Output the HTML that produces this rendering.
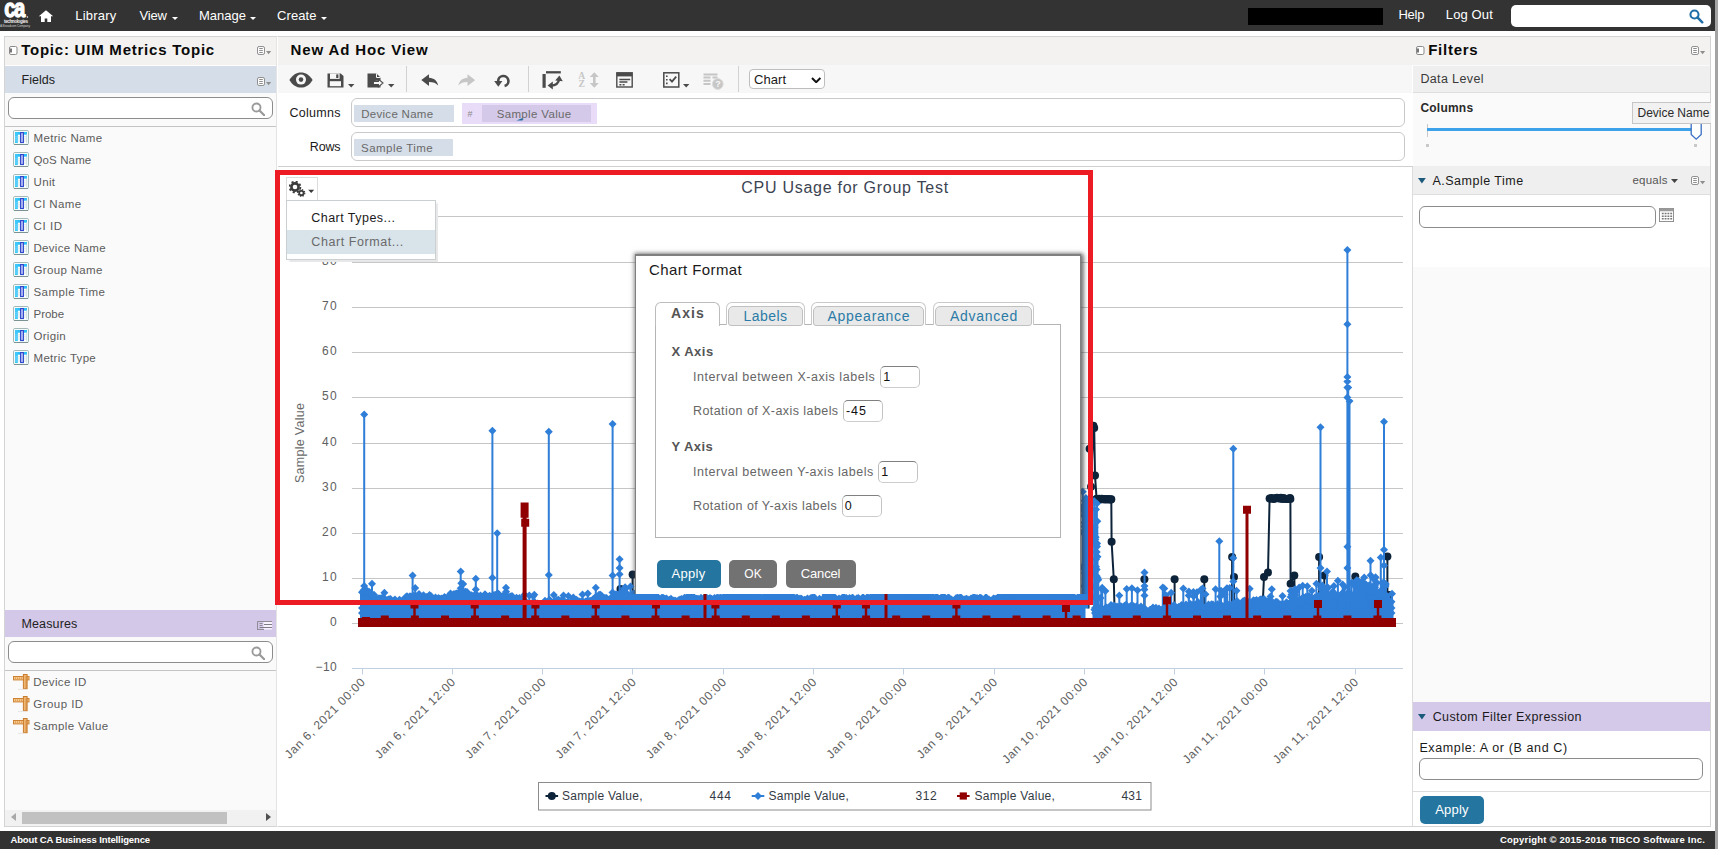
<!DOCTYPE html>
<html><head><meta charset="utf-8"><title>New Ad Hoc View</title>
<style>
*{box-sizing:border-box;margin:0;padding:0}
html,body{width:1725px;height:855px;overflow:hidden;background:#fff}
body{font-family:"Liberation Sans",sans-serif;font-size:12px;color:#222;position:relative}
.a{position:absolute}
.t{position:absolute;white-space:nowrap;line-height:1}
#nav{left:0;top:0;width:1715px;height:31px;background:#333}
#nav .t{color:#fff;font-size:13px;top:9px;letter-spacing:.35px}
.caret{position:absolute;width:0;height:0;border-left:4px solid transparent;border-right:4px solid transparent;border-top:4px solid #fff}
.panel{border:1px solid #d9d9d9;background:#fafafa}
.ptitle{background:#f3f2f1}
.h1{font-weight:bold;font-size:15px;color:#111;letter-spacing:.55px}
.inp{position:absolute;background:#fff;border:1px solid #9a9a9a;border-radius:5px}
.li{font-size:11.5px;color:#555;letter-spacing:.45px}
.btn{position:absolute;border-radius:4px;color:#fff;font-size:12.5px;text-align:center;letter-spacing:.3px}
.pill{position:absolute;background:#d4dce8}
.pill span,.pilltxt{position:absolute;white-space:nowrap;font-size:11.5px;color:#666;letter-spacing:.45px;line-height:1}
.lbl{font-size:12.5px;color:#222;letter-spacing:.35px}
.dlg .t{font-size:12.5px;color:#555;letter-spacing:.3px}
.tab{position:absolute;border:1px solid #b9b9b9;border-bottom:none;border-radius:5px 5px 0 0;background:#fff}
.tabi{position:absolute;background:#e9e9e9;border:1px solid #c4c4c4;border-bottom:none;border-radius:4px 4px 0 0}
.dinp{position:absolute;background:#fff;border:1px solid #a8a8a8;border-radius:4px;font-size:12.5px;color:#111;line-height:1}
</style></head><body>

<div class="a " style="left:277px;top:36px;width:1434px;height:791px;background:#fff;border:1px solid #d4d4d4;border-left-color:#fff"></div><div class="a " style="left:278px;top:37px;width:1432px;height:28px;background:#f3f2f0"></div><div class="t " style="left:290.5px;top:42.0px;font-size:15px;letter-spacing:0.87px;font-weight:bold;color:#0a0a0a;">New Ad Hoc View</div><div class="a " style="left:278px;top:65px;width:1134px;height:27.5px;background:#f7f7f7"></div><svg class="a" style="left:288.5px;top:72px" width="24" height="16" viewBox="0 0 24 16"><path d="M0.4 8C3.5 2.8 7.5 0.4 12 0.4S20.5 2.8 23.6 8C20.5 13.2 16.5 15.6 12 15.6S3.5 13.2 0.4 8z" fill="#4a4a4a"/><circle cx="12" cy="7.6" r="5" fill="#f7f7f7"/><circle cx="12" cy="7.6" r="2.3" fill="#4a4a4a"/></svg><svg class="a" style="left:326.5px;top:73px" width="17" height="15" viewBox="0 0 17 15"><path d="M0.5 0.5h13.2l2.8 2.4v11.6h-16z" fill="#4a4a4a"/><rect x="3" y="0.5" width="9.6" height="5.4" fill="#f7f7f7"/><rect x="9.2" y="1.4" width="2.2" height="3.6" fill="#4a4a4a"/><rect x="2.8" y="8.2" width="11.2" height="5" fill="#f7f7f7"/></svg><svg class="a" style="left:347.5px;top:84.3px" width="7" height="4" viewBox="0 0 7 4"><path d="M0 0h6.4L3.2 3.4z" fill="#4a4a4a"/></svg><svg class="a" style="left:367px;top:73px" width="17" height="15" viewBox="0 0 17 15"><path d="M0.5 0.5h9l4 4v3.2h-5v4h5v2.8h-13z" fill="#4a4a4a"/><path d="M9.5 0.5v4h4" fill="none" stroke="#f7f7f7" stroke-width="1"/><path d="M6.4 8.4h5v-2.2l4.6 3.8-4.6 3.8v-2.2h-5z" fill="#f7f7f7" stroke="#4a4a4a" stroke-width="1.1"/></svg><svg class="a" style="left:387.5px;top:84.3px" width="7" height="4" viewBox="0 0 7 4"><path d="M0 0h6.4L3.2 3.4z" fill="#4a4a4a"/></svg><div class="a " style="left:406px;top:66px;width:1px;height:26px;background:#d2d2d2"></div><svg class="a" style="left:421.3px;top:74px" width="17.5" height="12.5" viewBox="0 0 17.5 12.5"><path d="M0.3 6.1L8 0.2v3.5c4.9 0.3 8.2 2.7 9.2 7.9-2.2-2.7-4.9-3.6-9.2-3.6v4.1z" fill="#4a4a4a"/></svg><svg class="a" style="left:457.8px;top:74px" width="17.5" height="12.5" viewBox="0 0 17.5 12.5"><g transform="translate(17.5 0) scale(-1 1)"><path d="M0.3 6.1L8 0.2v3.5c4.9 0.3 8.2 2.7 9.2 7.9-2.2-2.7-4.9-3.6-9.2-3.6v4.1z" fill="#c6c6c6"/></g></svg><svg class="a" style="left:494px;top:73.5px" width="16" height="14" viewBox="0 0 16 14"><path d="M4.2 7.2A5.1 5.1 0 1 1 10.6 12" fill="none" stroke="#4a4a4a" stroke-width="2.6"/><path d="M0.2 7h8.2l-4.1 5.8z" fill="#4a4a4a"/></svg><div class="a " style="left:528px;top:66px;width:1px;height:26px;background:#d2d2d2"></div><svg class="a" style="left:542px;top:71px" width="21" height="19" viewBox="0 0 21 19"><path d="M4 1.3h14.8" stroke="#4a4a4a" stroke-width="2.3"/><path d="M2.1 3v13.8" stroke="#4a4a4a" stroke-width="3.2"/><path d="M9 14.6c5 0 7.6-2.2 8.2-6.4" fill="none" stroke="#4a4a4a" stroke-width="2.3"/><path d="M13.2 9.6l4.2-5 3.4 5.6z" fill="#4a4a4a"/><path d="M10.8 10.6v8L5.6 14.6z" fill="#4a4a4a"/></svg><svg class="a" style="left:577.5px;top:72px" width="21" height="16" viewBox="0 0 21 16"><text x="0.2" y="6.8" font-family="Liberation Serif" font-weight="bold" font-size="9.6" fill="#c6c6c6">A</text><text x="0.6" y="15.4" font-family="Liberation Serif" font-weight="bold" font-size="9.6" fill="#c6c6c6">Z</text><path d="M16.3 3.5v9" stroke="#c6c6c6" stroke-width="2.6"/><path d="M11.8 5l4.5-4.8L20.8 5zM11.8 11l4.5 4.8L20.8 11z" fill="#c6c6c6"/></svg><svg class="a" style="left:615.5px;top:72px" width="18" height="16" viewBox="0 0 18 16"><rect x="0.8" y="0.8" width="15.4" height="14.2" fill="#f7f7f7" stroke="#4a4a4a" stroke-width="1.4"/><rect x="0.8" y="0.8" width="15.4" height="3.6" fill="#4a4a4a"/><path d="M3.4 7.4h10.8M3.4 10h8" stroke="#4a4a4a" stroke-width="1.5"/><path d="M3.4 12.8h2M6.6 12.8h2" stroke="#4a4a4a" stroke-width="1.4"/></svg><svg class="a" style="left:662.5px;top:72px" width="17" height="16" viewBox="0 0 17 16"><rect x="0.8" y="0.8" width="15" height="14.2" fill="#f7f7f7" stroke="#4a4a4a" stroke-width="1.5"/><path d="M3 4.2h1.6M3 7.8h1.6M3 11.4h1.6" stroke="#4a4a4a" stroke-width="1.6"/><path d="M6.6 7.2l2.4 2.4 4.2-5" fill="none" stroke="#4a4a4a" stroke-width="1.8"/></svg><svg class="a" style="left:683.2px;top:84.3px" width="7" height="4" viewBox="0 0 7 4"><path d="M0 0h6.4L3.2 3.4z" fill="#4a4a4a"/></svg><svg class="a" style="left:703px;top:72.5px" width="21" height="17" viewBox="0 0 21 17"><path d="M0.5 1.4h14M0.5 4.6h7M0.5 7.8h7M0.5 11h7M9.5 4.6h5" stroke="#c6c6c6" stroke-width="2"/><circle cx="14.8" cy="11" r="5.4" fill="#c6c6c6" stroke="#dcdcdc"/><text x="12.3" y="14.2" font-family="Liberation Sans" font-weight="bold" font-size="9" fill="#f7f7f7">?</text></svg><div class="a " style="left:737.5px;top:66px;width:1px;height:26px;background:#d2d2d2"></div><div class="a " style="left:748.5px;top:69px;width:76.5px;height:20.3px;background:#fff;border:1px solid #bebebe;border-radius:4px"></div><div class="t " style="left:754.0px;top:73.0px;font-size:13px;letter-spacing:0.05px;color:#1a1a1a;">Chart</div><svg class="a" style="left:810.5px;top:76.5px" width="10.5" height="6.5" viewBox="0 0 10.5 6.5"><path d="M1 1l4.2 4.2L9.4 1" fill="none" stroke="#111" stroke-width="2"/></svg><div class="t " style="left:289.4px;top:107.0px;font-size:12.5px;letter-spacing:0.31px;color:#1a1a1a;">Columns</div><div class="a " style="left:351px;top:98px;width:1054px;height:29px;background:#fff;border:1px solid #c9c9c9;border-radius:6px"></div><div class="a " style="left:354px;top:105px;width:99.5px;height:17px;background:#d5dde8"></div><div class="t " style="left:361.2px;top:109.0px;font-size:11.5px;letter-spacing:0.29px;color:#6a6a6a;">Device Name</div><div class="a " style="left:461.5px;top:103px;width:135.5px;height:20.5px;background:#e8dcf8"></div><div class="a " style="left:481.8px;top:105px;width:109.7px;height:16.7px;background:#d4c9e8"></div><div class="t " style="left:467.5px;top:110.0px;font-size:10px;color:#8a8a8a;font-size:9px;">#</div><div class="t " style="left:496.7px;top:109.0px;font-size:11.5px;letter-spacing:0.34px;color:#6a6a6a;">Sample Value</div><svg class="a" style="left:516px;top:116.5px" width="7" height="4" viewBox="0 0 7 4"><path d="M0.5 3.5L6.5 1v2.5z" fill="#1f6ea6"/></svg><div class="t " style="left:309.8px;top:141.0px;font-size:12.5px;letter-spacing:-0.15px;color:#1a1a1a;">Rows</div><div class="a " style="left:351px;top:132px;width:1054px;height:29px;background:#fff;border:1px solid #c9c9c9;border-radius:6px"></div><div class="a " style="left:354px;top:139px;width:99px;height:17px;background:#d5dde8"></div><div class="t " style="left:361.1px;top:143.0px;font-size:11.5px;letter-spacing:0.45px;color:#6a6a6a;">Sample Time</div><div class="a " style="left:278px;top:166px;width:1135px;height:1px;background:#cfcfcf"></div>
<div class="a " style="left:1413px;top:65px;width:297px;height:761px;background:#fafafa"></div><div class="a " style="left:1412px;top:167px;width:1px;height:659px;background:#dcdcdc"></div><svg class="a" style="left:1415.8px;top:45.5px" width="9" height="10" viewBox="0 0 9 10"><rect x="0.5" y="0.5" width="7.5" height="8" rx="1.5" fill="#fff" stroke="#8a8a8a"/><rect x="1" y="2.5" width="2" height="4" fill="#777"/></svg><div class="t " style="left:1428.2px;top:42.0px;font-size:15px;letter-spacing:0.75px;font-weight:bold;color:#0a0a0a;">Filters</div><svg class="a" style="left:1691px;top:46px" width="15" height="10" viewBox="0 0 15 10"><rect x="0.5" y="0.5" width="7" height="8" rx="1.6" fill="#fdfdfd" stroke="#8e8e8e"/><path d="M2.2 2.5h3.6M2.2 4.5h3.6M2.2 6.5h3.6" stroke="#8e8e8e" stroke-width="1"/><path d="M9 5h5.2l-2.6 3.2z" fill="#8e8e8e"/></svg><div class="a " style="left:1413px;top:65.5px;width:297px;height:27px;background:#efefef;border-bottom:1px solid #dedede"></div><div class="t " style="left:1420.4px;top:73.0px;font-size:12.5px;letter-spacing:0.37px;color:#3a3a3a;">Data Level</div><div class="t " style="left:1420.4px;top:102.0px;font-size:12px;letter-spacing:0.23px;font-weight:bold;color:#2a2a2a;">Columns</div><div class="a " style="left:1632px;top:101.5px;width:79px;height:22.5px;background:#f1f1f1;border:1px solid #c6c6c6;border-right:none"></div><div class="t " style="left:1637.5px;top:107.0px;font-size:12px;letter-spacing:-0.02px;color:#2a2a2a;">Device Name</div><div class="a " style="left:1426.5px;top:124px;width:1px;height:13px;background:#c8c8c8"></div><div class="a " style="left:1427px;top:127.5px;width:265px;height:3.8px;background:#3ea2ea"></div><svg class="a" style="left:1689.5px;top:123.5px" width="13" height="17" viewBox="0 0 13 17"><path d="M1.2 0v10.5L6.2 15.2 11.2 10.5V0" fill="#fff" stroke="#3b6fc4" stroke-width="1.3"/></svg><div class="a " style="left:1426px;top:144px;width:3px;height:3px;background:#c9c9c9"></div><div class="a " style="left:1694px;top:144px;width:3px;height:3px;background:#c9c9c9"></div><div class="a " style="left:1413px;top:166px;width:297px;height:28.5px;background:#efefef;border-bottom:1px solid #dedede"></div><svg class="a" style="left:1418px;top:178px" width="8" height="6"><path d="M0 0h7.8L3.9 5.4z" fill="#1c5a7c"/></svg><div class="t " style="left:1432.5px;top:175.0px;font-size:12.5px;letter-spacing:0.49px;color:#1a1a1a;">A.Sample Time</div><div class="t " style="left:1632.5px;top:175.0px;font-size:11.5px;letter-spacing:0.22px;color:#555;">equals</div><svg class="a" style="left:1671.3px;top:179.2px" width="8" height="5"><path d="M0 0h7L3.5 4z" fill="#444"/></svg><svg class="a" style="left:1691px;top:176px" width="15" height="10" viewBox="0 0 15 10"><rect x="0.5" y="0.5" width="7" height="8" rx="1.6" fill="#fdfdfd" stroke="#8e8e8e"/><path d="M2.2 2.5h3.6M2.2 4.5h3.6M2.2 6.5h3.6" stroke="#8e8e8e" stroke-width="1"/><path d="M9 5h5.2l-2.6 3.2z" fill="#8e8e8e"/></svg><div class="a " style="left:1413px;top:194.5px;width:297px;height:72px;background:#fff"></div><div class="a " style="left:1419px;top:206px;width:237px;height:22px;background:#fff;border:1px solid #8c8c8c;border-radius:6px"></div><svg class="a" style="left:1659px;top:208px" width="15" height="14" viewBox="0 0 16 15" preserveAspectRatio="none"><rect x="0.5" y="0.5" width="15" height="14" fill="#fff" stroke="#8a8a8a"/><rect x="0.5" y="0.5" width="15" height="3" fill="#9a9a9a"/><path d="M3 6h2M6 6h2M9 6h2M12 6h2M3 8.8h2M6 8.8h2M9 8.8h2M12 8.8h2M3 11.6h2M6 11.6h2M9 11.6h2M12 11.6h2" stroke="#777" stroke-width="1.6"/></svg><div class="a " style="left:1413px;top:701.5px;width:297px;height:29px;background:#d5c9ea"></div><svg class="a" style="left:1418px;top:713.5px" width="8" height="6"><path d="M0 0h7.8L3.9 5.4z" fill="#1c5a7c"/></svg><div class="t " style="left:1432.7px;top:711.0px;font-size:12.5px;letter-spacing:0.40px;color:#1a1a1a;">Custom Filter Expression</div><div class="a " style="left:1413px;top:730.5px;width:297px;height:95.5px;background:#fff"></div><div class="t " style="left:1419.4px;top:742.0px;font-size:12.5px;letter-spacing:0.62px;color:#1a1a1a;">Example: A or (B and C)</div><div class="a " style="left:1419px;top:758px;width:284px;height:22px;background:#fff;border:1px solid #8c8c8c;border-radius:6px"></div><div class="a " style="left:1413px;top:791px;width:297px;height:1px;background:#dcdcdc"></div><div class="a " style="left:1420px;top:796px;width:64px;height:27.7px;background:#24759f;border-radius:5px"></div><div class="t " style="left:1435.2px;top:803.0px;font-size:13px;letter-spacing:0.22px;color:#fff;">Apply</div>
<div class="a " style="left:0px;top:0px;width:1715px;height:30.5px;background:#333"><svg class="a" style="left:0;top:0" width="34" height="31" viewBox="0 0 34 31"><text transform="translate(4.2 17.2) scale(.78 1)" font-family="Liberation Sans" font-weight="bold" font-size="26" letter-spacing="-2" fill="#fff" stroke="#fff" stroke-width="1.3" stroke-linejoin="round">ca</text><text x="4" y="22.6" font-family="Liberation Sans" font-weight="bold" font-size="4.6" fill="#eee" textLength="24">technologies</text><text x="0" y="27.2" font-family="Liberation Sans" font-size="3.2" fill="#ccc" textLength="30">A Broadcom Company</text><circle cx="27.4" cy="17" r=".7" fill="#fff"/></svg><svg class="a" style="left:38px;top:9.5px" width="16" height="13" viewBox="0 0 16 13"><path d="M8 0.3L0.8 6.2h2.2v5.9h3.7V8.6h2.6v3.5h3.7V6.2h2.2z" fill="#fff"/></svg><div class="t " style="left:75.2px;top:9.0px;font-size:13px;letter-spacing:0.21px;color:#fff;">Library</div><div class="t " style="left:139.6px;top:9.0px;font-size:13px;letter-spacing:-0.18px;color:#fff;">View</div><div class="caret" style="left:172px;top:16.5px;border-width:3.5px 3px 0 3px"></div><div class="t " style="left:199.0px;top:9.0px;font-size:13px;letter-spacing:0.00px;color:#fff;">Manage</div><div class="caret" style="left:250px;top:16.5px;border-width:3.5px 3px 0 3px"></div><div class="t " style="left:277.0px;top:9.0px;font-size:13px;letter-spacing:0.08px;color:#fff;">Create</div><div class="caret" style="left:320.5px;top:16.5px;border-width:3.5px 3px 0 3px"></div><div class="a " style="left:1248px;top:8px;width:135px;height:17px;background:#000"></div><div class="t " style="left:1398.4px;top:8.0px;font-size:13px;letter-spacing:-0.21px;color:#fff;">Help</div><div class="t " style="left:1445.8px;top:8.0px;font-size:13px;letter-spacing:0.12px;color:#fff;">Log Out</div><div class="a " style="left:1511px;top:5px;width:200px;height:22px;background:#fff;border-radius:5px"></div><svg class="a" style="left:1689px;top:9px" width="14.5" height="14.5" viewBox="0 0 14 14"><circle cx="5.3" cy="5.3" r="3.9" fill="none" stroke="#1f6ea6" stroke-width="2"/><path d="M8.2 8.2L12.8 12.8" stroke="#1f6ea6" stroke-width="2.4" stroke-linecap="round"/></svg></div><div class="a " style="left:1715px;top:0px;width:3px;height:849px;background:#a4a4a4"></div><div class="a " style="left:0px;top:831px;width:1715px;height:18px;background:#323232"></div><div class="t " style="left:10.4px;top:835.0px;font-size:9.5px;letter-spacing:-0.12px;font-weight:bold;color:#fff;">About CA Business Intelligence</div><div class="t " style="left:1499.9px;top:835.0px;font-size:9.5px;letter-spacing:0.21px;font-weight:bold;color:#fff;">Copyright © 2015-2016 TIBCO Software Inc.</div><div class="a " style="left:4px;top:36px;width:273px;height:791px;background:#fafafa;border:1px solid #d4d4d4;border-right-color:#e4e4e4"></div><div class="a " style="left:5px;top:37px;width:271px;height:27.5px;background:#f3f2f0"></div><svg class="a" style="left:8.7px;top:45.5px" width="9" height="10" viewBox="0 0 9 10"><rect x="0.5" y="0.5" width="7.5" height="8" rx="1.5" fill="#fff" stroke="#8a8a8a"/><rect x="1" y="2.5" width="2" height="4" fill="#777"/></svg><div class="t " style="left:21.2px;top:42.0px;font-size:15px;letter-spacing:0.77px;font-weight:bold;color:#0a0a0a;">Topic: UIM Metrics Topic</div><svg class="a" style="left:257px;top:46px" width="15" height="10" viewBox="0 0 15 10"><rect x="0.5" y="0.5" width="7" height="8" rx="1.6" fill="#fdfdfd" stroke="#8e8e8e"/><path d="M2.2 2.5h3.6M2.2 4.5h3.6M2.2 6.5h3.6" stroke="#8e8e8e" stroke-width="1"/><path d="M9 5h5.2l-2.6 3.2z" fill="#8e8e8e"/></svg><div class="a " style="left:5px;top:64.5px;width:271px;height:1.5px;background:#fdfdfd"></div><div class="a " style="left:5px;top:66px;width:271px;height:27px;background:#d5dde8"></div><div class="t " style="left:21.5px;top:74.0px;font-size:12.5px;letter-spacing:0.03px;color:#222;">Fields</div><svg class="a" style="left:257px;top:77px" width="15" height="10" viewBox="0 0 15 10"><rect x="0.5" y="0.5" width="7" height="8" rx="1.6" fill="#fdfdfd" stroke="#8e8e8e"/><path d="M2.2 2.5h3.6M2.2 4.5h3.6M2.2 6.5h3.6" stroke="#8e8e8e" stroke-width="1"/><path d="M9 5h5.2l-2.6 3.2z" fill="#8e8e8e"/></svg><div class="a " style="left:8px;top:97px;width:265px;height:22px;background:#fff;border:1px solid #8c8c8c;border-radius:6px"></div><svg class="a" style="left:250.5px;top:101.5px" width="14.5" height="14.5" viewBox="0 0 14 14"><circle cx="5.3" cy="5.3" r="3.9" fill="none" stroke="#9a9a9a" stroke-width="1.8"/><path d="M8.2 8.2L12.8 12.8" stroke="#9a9a9a" stroke-width="2.2" stroke-linecap="round"/></svg><div class="a " style="left:5px;top:126px;width:271px;height:1px;background:#c4c4c4"></div><svg class="a" style="left:13px;top:130px" width="16" height="16" viewBox="0 0 16 16"><rect x="0.5" y="0.5" width="15" height="14" rx="1.2" fill="#f3fbfb" stroke="#a3b8b8"/><path d="M1 14.5h14" stroke="#7d9292"/><rect x="2" y="2" width="12" height="11" fill="#fff"/><rect x="2" y="2" width="12" height="2.7" fill="#2cc0f8"/><rect x="2" y="2" width="2.9" height="11" fill="#3dc7fb"/><path d="M4.9 6.8H14M4.9 8.9H14M4.9 11H14M13.6 4.7V13" stroke="#c9dcdc" stroke-width=".8"/><path d="M2 6.8h2.9M2 8.9h2.9M2 11h2.9" stroke="#86dcfc" stroke-width=".7"/><rect x="7.05" y="2" width="3.9" height="2.6" fill="#6a80e8"/><rect x="7.6" y="2.6" width="2.8" height="9.9" fill="#bcc6f6" stroke="#3148cd" stroke-width="1.15"/><path d="M8.2 4.8h1.6M8.2 6.9h1.6M8.2 9h1.6M8.2 11h1.6" stroke="#a9b4f0" stroke-width=".6"/></svg><div class="t " style="left:33.5px;top:133.0px;font-size:11.5px;letter-spacing:0.34px;color:#5c5c5c;">Metric Name</div><svg class="a" style="left:13px;top:152px" width="16" height="16" viewBox="0 0 16 16"><rect x="0.5" y="0.5" width="15" height="14" rx="1.2" fill="#f3fbfb" stroke="#a3b8b8"/><path d="M1 14.5h14" stroke="#7d9292"/><rect x="2" y="2" width="12" height="11" fill="#fff"/><rect x="2" y="2" width="12" height="2.7" fill="#2cc0f8"/><rect x="2" y="2" width="2.9" height="11" fill="#3dc7fb"/><path d="M4.9 6.8H14M4.9 8.9H14M4.9 11H14M13.6 4.7V13" stroke="#c9dcdc" stroke-width=".8"/><path d="M2 6.8h2.9M2 8.9h2.9M2 11h2.9" stroke="#86dcfc" stroke-width=".7"/><rect x="7.05" y="2" width="3.9" height="2.6" fill="#6a80e8"/><rect x="7.6" y="2.6" width="2.8" height="9.9" fill="#bcc6f6" stroke="#3148cd" stroke-width="1.15"/><path d="M8.2 4.8h1.6M8.2 6.9h1.6M8.2 9h1.6M8.2 11h1.6" stroke="#a9b4f0" stroke-width=".6"/></svg><div class="t " style="left:33.5px;top:155.0px;font-size:11.5px;letter-spacing:0.12px;color:#5c5c5c;">QoS Name</div><svg class="a" style="left:13px;top:174px" width="16" height="16" viewBox="0 0 16 16"><rect x="0.5" y="0.5" width="15" height="14" rx="1.2" fill="#f3fbfb" stroke="#a3b8b8"/><path d="M1 14.5h14" stroke="#7d9292"/><rect x="2" y="2" width="12" height="11" fill="#fff"/><rect x="2" y="2" width="12" height="2.7" fill="#2cc0f8"/><rect x="2" y="2" width="2.9" height="11" fill="#3dc7fb"/><path d="M4.9 6.8H14M4.9 8.9H14M4.9 11H14M13.6 4.7V13" stroke="#c9dcdc" stroke-width=".8"/><path d="M2 6.8h2.9M2 8.9h2.9M2 11h2.9" stroke="#86dcfc" stroke-width=".7"/><rect x="7.05" y="2" width="3.9" height="2.6" fill="#6a80e8"/><rect x="7.6" y="2.6" width="2.8" height="9.9" fill="#bcc6f6" stroke="#3148cd" stroke-width="1.15"/><path d="M8.2 4.8h1.6M8.2 6.9h1.6M8.2 9h1.6M8.2 11h1.6" stroke="#a9b4f0" stroke-width=".6"/></svg><div class="t " style="left:33.5px;top:177.0px;font-size:11.5px;letter-spacing:0.35px;color:#5c5c5c;">Unit</div><svg class="a" style="left:13px;top:196px" width="16" height="16" viewBox="0 0 16 16"><rect x="0.5" y="0.5" width="15" height="14" rx="1.2" fill="#f3fbfb" stroke="#a3b8b8"/><path d="M1 14.5h14" stroke="#7d9292"/><rect x="2" y="2" width="12" height="11" fill="#fff"/><rect x="2" y="2" width="12" height="2.7" fill="#2cc0f8"/><rect x="2" y="2" width="2.9" height="11" fill="#3dc7fb"/><path d="M4.9 6.8H14M4.9 8.9H14M4.9 11H14M13.6 4.7V13" stroke="#c9dcdc" stroke-width=".8"/><path d="M2 6.8h2.9M2 8.9h2.9M2 11h2.9" stroke="#86dcfc" stroke-width=".7"/><rect x="7.05" y="2" width="3.9" height="2.6" fill="#6a80e8"/><rect x="7.6" y="2.6" width="2.8" height="9.9" fill="#bcc6f6" stroke="#3148cd" stroke-width="1.15"/><path d="M8.2 4.8h1.6M8.2 6.9h1.6M8.2 9h1.6M8.2 11h1.6" stroke="#a9b4f0" stroke-width=".6"/></svg><div class="t " style="left:33.5px;top:199.0px;font-size:11.5px;letter-spacing:0.39px;color:#5c5c5c;">CI Name</div><svg class="a" style="left:13px;top:218px" width="16" height="16" viewBox="0 0 16 16"><rect x="0.5" y="0.5" width="15" height="14" rx="1.2" fill="#f3fbfb" stroke="#a3b8b8"/><path d="M1 14.5h14" stroke="#7d9292"/><rect x="2" y="2" width="12" height="11" fill="#fff"/><rect x="2" y="2" width="12" height="2.7" fill="#2cc0f8"/><rect x="2" y="2" width="2.9" height="11" fill="#3dc7fb"/><path d="M4.9 6.8H14M4.9 8.9H14M4.9 11H14M13.6 4.7V13" stroke="#c9dcdc" stroke-width=".8"/><path d="M2 6.8h2.9M2 8.9h2.9M2 11h2.9" stroke="#86dcfc" stroke-width=".7"/><rect x="7.05" y="2" width="3.9" height="2.6" fill="#6a80e8"/><rect x="7.6" y="2.6" width="2.8" height="9.9" fill="#bcc6f6" stroke="#3148cd" stroke-width="1.15"/><path d="M8.2 4.8h1.6M8.2 6.9h1.6M8.2 9h1.6M8.2 11h1.6" stroke="#a9b4f0" stroke-width=".6"/></svg><div class="t " style="left:33.5px;top:221.0px;font-size:11.5px;letter-spacing:0.58px;color:#5c5c5c;">CI ID</div><svg class="a" style="left:13px;top:240px" width="16" height="16" viewBox="0 0 16 16"><rect x="0.5" y="0.5" width="15" height="14" rx="1.2" fill="#f3fbfb" stroke="#a3b8b8"/><path d="M1 14.5h14" stroke="#7d9292"/><rect x="2" y="2" width="12" height="11" fill="#fff"/><rect x="2" y="2" width="12" height="2.7" fill="#2cc0f8"/><rect x="2" y="2" width="2.9" height="11" fill="#3dc7fb"/><path d="M4.9 6.8H14M4.9 8.9H14M4.9 11H14M13.6 4.7V13" stroke="#c9dcdc" stroke-width=".8"/><path d="M2 6.8h2.9M2 8.9h2.9M2 11h2.9" stroke="#86dcfc" stroke-width=".7"/><rect x="7.05" y="2" width="3.9" height="2.6" fill="#6a80e8"/><rect x="7.6" y="2.6" width="2.8" height="9.9" fill="#bcc6f6" stroke="#3148cd" stroke-width="1.15"/><path d="M8.2 4.8h1.6M8.2 6.9h1.6M8.2 9h1.6M8.2 11h1.6" stroke="#a9b4f0" stroke-width=".6"/></svg><div class="t " style="left:33.5px;top:243.0px;font-size:11.5px;letter-spacing:0.30px;color:#5c5c5c;">Device Name</div><svg class="a" style="left:13px;top:262px" width="16" height="16" viewBox="0 0 16 16"><rect x="0.5" y="0.5" width="15" height="14" rx="1.2" fill="#f3fbfb" stroke="#a3b8b8"/><path d="M1 14.5h14" stroke="#7d9292"/><rect x="2" y="2" width="12" height="11" fill="#fff"/><rect x="2" y="2" width="12" height="2.7" fill="#2cc0f8"/><rect x="2" y="2" width="2.9" height="11" fill="#3dc7fb"/><path d="M4.9 6.8H14M4.9 8.9H14M4.9 11H14M13.6 4.7V13" stroke="#c9dcdc" stroke-width=".8"/><path d="M2 6.8h2.9M2 8.9h2.9M2 11h2.9" stroke="#86dcfc" stroke-width=".7"/><rect x="7.05" y="2" width="3.9" height="2.6" fill="#6a80e8"/><rect x="7.6" y="2.6" width="2.8" height="9.9" fill="#bcc6f6" stroke="#3148cd" stroke-width="1.15"/><path d="M8.2 4.8h1.6M8.2 6.9h1.6M8.2 9h1.6M8.2 11h1.6" stroke="#a9b4f0" stroke-width=".6"/></svg><div class="t " style="left:33.5px;top:265.0px;font-size:11.5px;letter-spacing:0.34px;color:#5c5c5c;">Group Name</div><svg class="a" style="left:13px;top:284px" width="16" height="16" viewBox="0 0 16 16"><rect x="0.5" y="0.5" width="15" height="14" rx="1.2" fill="#f3fbfb" stroke="#a3b8b8"/><path d="M1 14.5h14" stroke="#7d9292"/><rect x="2" y="2" width="12" height="11" fill="#fff"/><rect x="2" y="2" width="12" height="2.7" fill="#2cc0f8"/><rect x="2" y="2" width="2.9" height="11" fill="#3dc7fb"/><path d="M4.9 6.8H14M4.9 8.9H14M4.9 11H14M13.6 4.7V13" stroke="#c9dcdc" stroke-width=".8"/><path d="M2 6.8h2.9M2 8.9h2.9M2 11h2.9" stroke="#86dcfc" stroke-width=".7"/><rect x="7.05" y="2" width="3.9" height="2.6" fill="#6a80e8"/><rect x="7.6" y="2.6" width="2.8" height="9.9" fill="#bcc6f6" stroke="#3148cd" stroke-width="1.15"/><path d="M8.2 4.8h1.6M8.2 6.9h1.6M8.2 9h1.6M8.2 11h1.6" stroke="#a9b4f0" stroke-width=".6"/></svg><div class="t " style="left:33.5px;top:287.0px;font-size:11.5px;letter-spacing:0.43px;color:#5c5c5c;">Sample Time</div><svg class="a" style="left:13px;top:306px" width="16" height="16" viewBox="0 0 16 16"><rect x="0.5" y="0.5" width="15" height="14" rx="1.2" fill="#f3fbfb" stroke="#a3b8b8"/><path d="M1 14.5h14" stroke="#7d9292"/><rect x="2" y="2" width="12" height="11" fill="#fff"/><rect x="2" y="2" width="12" height="2.7" fill="#2cc0f8"/><rect x="2" y="2" width="2.9" height="11" fill="#3dc7fb"/><path d="M4.9 6.8H14M4.9 8.9H14M4.9 11H14M13.6 4.7V13" stroke="#c9dcdc" stroke-width=".8"/><path d="M2 6.8h2.9M2 8.9h2.9M2 11h2.9" stroke="#86dcfc" stroke-width=".7"/><rect x="7.05" y="2" width="3.9" height="2.6" fill="#6a80e8"/><rect x="7.6" y="2.6" width="2.8" height="9.9" fill="#bcc6f6" stroke="#3148cd" stroke-width="1.15"/><path d="M8.2 4.8h1.6M8.2 6.9h1.6M8.2 9h1.6M8.2 11h1.6" stroke="#a9b4f0" stroke-width=".6"/></svg><div class="t " style="left:33.5px;top:309.0px;font-size:11.5px;letter-spacing:-0.02px;color:#5c5c5c;">Probe</div><svg class="a" style="left:13px;top:328px" width="16" height="16" viewBox="0 0 16 16"><rect x="0.5" y="0.5" width="15" height="14" rx="1.2" fill="#f3fbfb" stroke="#a3b8b8"/><path d="M1 14.5h14" stroke="#7d9292"/><rect x="2" y="2" width="12" height="11" fill="#fff"/><rect x="2" y="2" width="12" height="2.7" fill="#2cc0f8"/><rect x="2" y="2" width="2.9" height="11" fill="#3dc7fb"/><path d="M4.9 6.8H14M4.9 8.9H14M4.9 11H14M13.6 4.7V13" stroke="#c9dcdc" stroke-width=".8"/><path d="M2 6.8h2.9M2 8.9h2.9M2 11h2.9" stroke="#86dcfc" stroke-width=".7"/><rect x="7.05" y="2" width="3.9" height="2.6" fill="#6a80e8"/><rect x="7.6" y="2.6" width="2.8" height="9.9" fill="#bcc6f6" stroke="#3148cd" stroke-width="1.15"/><path d="M8.2 4.8h1.6M8.2 6.9h1.6M8.2 9h1.6M8.2 11h1.6" stroke="#a9b4f0" stroke-width=".6"/></svg><div class="t " style="left:33.5px;top:331.0px;font-size:11.5px;letter-spacing:0.30px;color:#5c5c5c;">Origin</div><svg class="a" style="left:13px;top:350px" width="16" height="16" viewBox="0 0 16 16"><rect x="0.5" y="0.5" width="15" height="14" rx="1.2" fill="#f3fbfb" stroke="#a3b8b8"/><path d="M1 14.5h14" stroke="#7d9292"/><rect x="2" y="2" width="12" height="11" fill="#fff"/><rect x="2" y="2" width="12" height="2.7" fill="#2cc0f8"/><rect x="2" y="2" width="2.9" height="11" fill="#3dc7fb"/><path d="M4.9 6.8H14M4.9 8.9H14M4.9 11H14M13.6 4.7V13" stroke="#c9dcdc" stroke-width=".8"/><path d="M2 6.8h2.9M2 8.9h2.9M2 11h2.9" stroke="#86dcfc" stroke-width=".7"/><rect x="7.05" y="2" width="3.9" height="2.6" fill="#6a80e8"/><rect x="7.6" y="2.6" width="2.8" height="9.9" fill="#bcc6f6" stroke="#3148cd" stroke-width="1.15"/><path d="M8.2 4.8h1.6M8.2 6.9h1.6M8.2 9h1.6M8.2 11h1.6" stroke="#a9b4f0" stroke-width=".6"/></svg><div class="t " style="left:33.5px;top:353.0px;font-size:11.5px;letter-spacing:0.30px;color:#5c5c5c;">Metric Type</div><div class="a " style="left:5px;top:609.5px;width:271px;height:27.5px;background:#d4c8e8"></div><div class="t " style="left:21.4px;top:618.0px;font-size:12.5px;letter-spacing:0.15px;color:#222;">Measures</div><svg class="a" style="left:257px;top:621px" width="16" height="10" viewBox="0 0 16 10"><rect x="6.5" y="1" width="8.5" height="7.5" fill="#f6f1fd"/><path d="M0.5 9V0.5H15M1 8.5H7M2.5 2.5H5.5M2.5 4.5H5.5" stroke="#8f8c96" fill="none"/><path d="M7 3.5H15M2.5 6.5H15" stroke="#7f7c86" fill="none"/></svg><div class="a " style="left:8px;top:641px;width:265px;height:22px;background:#fff;border:1px solid #8c8c8c;border-radius:6px"></div><svg class="a" style="left:250.5px;top:645.5px" width="14.5" height="14.5" viewBox="0 0 14 14"><circle cx="5.3" cy="5.3" r="3.9" fill="none" stroke="#9a9a9a" stroke-width="1.8"/><path d="M8.2 8.2L12.8 12.8" stroke="#9a9a9a" stroke-width="2.2" stroke-linecap="round"/></svg><div class="a " style="left:5px;top:670px;width:271px;height:1px;background:#c4c4c4"></div><svg class="a" style="left:13px;top:674px" width="17" height="16" viewBox="0 0 17 16"><rect x="0.5" y="2.5" width="15.5" height="3.4" fill="#f7c88e" stroke="#cd8332"/><path d="M2.5 3.4v1.7M4.5 3.4v1.7M6.5 3.4v1.7M8.5 3.4v1.7" stroke="#de9d50" stroke-width=".9"/><rect x="10.4" y="0.5" width="3.7" height="14.2" fill="#f0b773" stroke="#c97c2c"/><path d="M12.4 3h1.4M12.4 5h1.4M12.4 7h1.4M12.4 9h1.4M12.4 11h1.4M12.4 13h1.4" stroke="#b86a20" stroke-width=".7"/><path d="M5 15.4h7" stroke="#e6e6e6" stroke-width="1"/></svg><div class="t " style="left:33.3px;top:677.0px;font-size:11.5px;letter-spacing:0.38px;color:#5c5c5c;">Device ID</div><svg class="a" style="left:13px;top:696px" width="17" height="16" viewBox="0 0 17 16"><rect x="0.5" y="2.5" width="15.5" height="3.4" fill="#f7c88e" stroke="#cd8332"/><path d="M2.5 3.4v1.7M4.5 3.4v1.7M6.5 3.4v1.7M8.5 3.4v1.7" stroke="#de9d50" stroke-width=".9"/><rect x="10.4" y="0.5" width="3.7" height="14.2" fill="#f0b773" stroke="#c97c2c"/><path d="M12.4 3h1.4M12.4 5h1.4M12.4 7h1.4M12.4 9h1.4M12.4 11h1.4M12.4 13h1.4" stroke="#b86a20" stroke-width=".7"/><path d="M5 15.4h7" stroke="#e6e6e6" stroke-width="1"/></svg><div class="t " style="left:33.3px;top:699.0px;font-size:11.5px;letter-spacing:0.46px;color:#5c5c5c;">Group ID</div><svg class="a" style="left:13px;top:718px" width="17" height="16" viewBox="0 0 17 16"><rect x="0.5" y="2.5" width="15.5" height="3.4" fill="#f7c88e" stroke="#cd8332"/><path d="M2.5 3.4v1.7M4.5 3.4v1.7M6.5 3.4v1.7M8.5 3.4v1.7" stroke="#de9d50" stroke-width=".9"/><rect x="10.4" y="0.5" width="3.7" height="14.2" fill="#f0b773" stroke="#c97c2c"/><path d="M12.4 3h1.4M12.4 5h1.4M12.4 7h1.4M12.4 9h1.4M12.4 11h1.4M12.4 13h1.4" stroke="#b86a20" stroke-width=".7"/><path d="M5 15.4h7" stroke="#e6e6e6" stroke-width="1"/></svg><div class="t " style="left:33.3px;top:721.0px;font-size:11.5px;letter-spacing:0.37px;color:#5c5c5c;">Sample Value</div><div class="a " style="left:5px;top:809.5px;width:271px;height:16.5px;background:#f1f1f1"></div><div class="a " style="left:22px;top:811.5px;width:205px;height:12px;background:#c1c1c1"></div><svg class="a" style="left:10px;top:812px" width="8" height="10"><path d="M6 1v8L1 5z" fill="#a8a8a8"/></svg><svg class="a" style="left:264px;top:812px" width="8" height="10"><path d="M2 1v8l5-4z" fill="#505050"/></svg>
<svg class="a" style="left:0;top:0" width="1725" height="855" viewBox="0 0 1725 855" font-family="Liberation Sans, sans-serif"><path d="M352 623.5H1403M352 578.5H1403M352 533.5H1403M352 488.5H1403M352 443.5H1403M352 397.5H1403M352 352.5H1403M352 307.5H1403M352 262.5H1403M352 216.5H1403" stroke="#c6c6c6" stroke-width="1" fill="none"/><path d="M352 668.5H1403M362.5 668.5v6M452.5 668.5v6M542.5 668.5v6M632.5 668.5v6M723.5 668.5v6M813.5 668.5v6M903.5 668.5v6M994.5 668.5v6M1084.5 668.5v6M1174.5 668.5v6M1264.5 668.5v6M1355.5 668.5v6" stroke="#c0d0e0" stroke-width="1" fill="none"/><text x="336.6" y="671.1" text-anchor="end" font-size="12" fill="#606060" textLength="21" lengthAdjust="spacing">−10</text><text x="336.6" y="626.1" text-anchor="end" font-size="12" fill="#606060" textLength="7.1" lengthAdjust="spacing">0</text><text x="336.6" y="581.1" text-anchor="end" font-size="12" fill="#606060" textLength="14.5" lengthAdjust="spacing">10</text><text x="336.6" y="536.1" text-anchor="end" font-size="12" fill="#606060" textLength="14.5" lengthAdjust="spacing">20</text><text x="336.6" y="491.1" text-anchor="end" font-size="12" fill="#606060" textLength="14.5" lengthAdjust="spacing">30</text><text x="336.6" y="446.1" text-anchor="end" font-size="12" fill="#606060" textLength="14.5" lengthAdjust="spacing">40</text><text x="336.6" y="400.1" text-anchor="end" font-size="12" fill="#606060" textLength="14.5" lengthAdjust="spacing">50</text><text x="336.6" y="355.1" text-anchor="end" font-size="12" fill="#606060" textLength="14.5" lengthAdjust="spacing">60</text><text x="336.6" y="310.1" text-anchor="end" font-size="12" fill="#606060" textLength="14.5" lengthAdjust="spacing">70</text><text x="336.6" y="265.1" text-anchor="end" font-size="12" fill="#606060" textLength="14.5" lengthAdjust="spacing">80</text><text transform="translate(304.2 443) rotate(-90)" text-anchor="middle" font-size="12.5" fill="#6a6a6a" textLength="80" lengthAdjust="spacing">Sample Value</text><text x="741.2" y="192.6" font-size="16" fill="#3c4452" textLength="207" lengthAdjust="spacing">CPU Usage for Group Test</text><text transform="translate(365.8 683) rotate(-45)" text-anchor="end" font-size="12" fill="#606060" textLength="108" lengthAdjust="spacing">Jan 6, 2021 00:00</text><text transform="translate(456.1 683) rotate(-45)" text-anchor="end" font-size="12" fill="#606060" textLength="108" lengthAdjust="spacing">Jan 6, 2021 12:00</text><text transform="translate(546.4 683) rotate(-45)" text-anchor="end" font-size="12" fill="#606060" textLength="108" lengthAdjust="spacing">Jan 7, 2021 00:00</text><text transform="translate(636.7 683) rotate(-45)" text-anchor="end" font-size="12" fill="#606060" textLength="108" lengthAdjust="spacing">Jan 7, 2021 12:00</text><text transform="translate(727 683) rotate(-45)" text-anchor="end" font-size="12" fill="#606060" textLength="108" lengthAdjust="spacing">Jan 8, 2021 00:00</text><text transform="translate(817.3 683) rotate(-45)" text-anchor="end" font-size="12" fill="#606060" textLength="108" lengthAdjust="spacing">Jan 8, 2021 12:00</text><text transform="translate(907.6 683) rotate(-45)" text-anchor="end" font-size="12" fill="#606060" textLength="108" lengthAdjust="spacing">Jan 9, 2021 00:00</text><text transform="translate(997.9 683) rotate(-45)" text-anchor="end" font-size="12" fill="#606060" textLength="108" lengthAdjust="spacing">Jan 9, 2021 12:00</text><text transform="translate(1088.2 683) rotate(-45)" text-anchor="end" font-size="12" fill="#606060" textLength="115" lengthAdjust="spacing">Jan 10, 2021 00:00</text><text transform="translate(1178.5 683) rotate(-45)" text-anchor="end" font-size="12" fill="#606060" textLength="115" lengthAdjust="spacing">Jan 10, 2021 12:00</text><text transform="translate(1268.8 683) rotate(-45)" text-anchor="end" font-size="12" fill="#606060" textLength="115" lengthAdjust="spacing">Jan 11, 2021 00:00</text><text transform="translate(1359.1 683) rotate(-45)" text-anchor="end" font-size="12" fill="#606060" textLength="115" lengthAdjust="spacing">Jan 11, 2021 12:00</text><path d="M620.5 610.7V589.1M632.6 610.7V574.6M1088.5 608.5L1089.6 448.8L1091 486.7L1093.4 425.8L1094.2 428.1L1095 475.4L1096.6 498.9L1096.6 499.1L1097.9 499.3L1099.2 498.7L1100.5 499.5L1101.8 498.8L1103.1 499.1L1104.4 499.5L1105.7 498.9L1107 499.5L1108.3 499L1109.6 499.5L1110.9 499.4L1111.3 499.3L1111.6 541.7L1113.8 579.2L1114.5 608.5M1144.4 610.7V579.2M1174.6 610.7V579.2M1204.3 610.7V579.2M1232.1 610.7V557.1M1234 610.7V576.9M1262.5 608.5L1264 576.9L1268 572.4L1269.6 498.4L1270.5 498.5L1271.8 498L1273.1 498.9L1274.4 498.8L1275.7 498.3L1277 497.8L1278.3 498.3L1279.6 498.6L1280.9 497.8L1282.2 499L1283.5 497.9L1284.8 498.7L1286.1 498.9L1287.4 498.9L1288.7 498.7L1290 498L1290.4 498.9L1290.6 583.7L1294.3 575.5L1295 608.5M1319.1 610.7V557.1M1324.3 610.7V575.5M1355.3 610.7V576.4M1387.4 610.7V556.6M1389 610.7V594.9" stroke="#0d233a" stroke-width="2" fill="none" stroke-linejoin="round"/><g fill="#0d233a"><circle cx="620.5" cy="589.1" r="4"/><circle cx="632.6" cy="574.6" r="4"/><circle cx="1089.6" cy="448.8" r="4"/><circle cx="1091" cy="486.7" r="4"/><circle cx="1093.4" cy="425.8" r="4"/><circle cx="1094.2" cy="428.1" r="4"/><circle cx="1095" cy="475.4" r="4"/><circle cx="1096.6" cy="498.9" r="4"/><circle cx="1096.6" cy="499.1" r="4"/><circle cx="1097.9" cy="499.3" r="4"/><circle cx="1099.2" cy="498.7" r="4"/><circle cx="1100.5" cy="499.5" r="4"/><circle cx="1101.8" cy="498.8" r="4"/><circle cx="1103.1" cy="499.1" r="4"/><circle cx="1104.4" cy="499.5" r="4"/><circle cx="1105.7" cy="498.9" r="4"/><circle cx="1107" cy="499.5" r="4"/><circle cx="1108.3" cy="499" r="4"/><circle cx="1109.6" cy="499.5" r="4"/><circle cx="1110.9" cy="499.4" r="4"/><circle cx="1111.3" cy="499.3" r="4"/><circle cx="1111.6" cy="541.7" r="4"/><circle cx="1113.8" cy="579.2" r="4"/><circle cx="1144.4" cy="579.2" r="4"/><circle cx="1174.6" cy="579.2" r="4"/><circle cx="1204.3" cy="579.2" r="4"/><circle cx="1232.1" cy="557.1" r="4"/><circle cx="1234" cy="576.9" r="4"/><circle cx="1264" cy="576.9" r="4"/><circle cx="1268" cy="572.4" r="4"/><circle cx="1269.6" cy="498.4" r="4"/><circle cx="1270.5" cy="498.5" r="4"/><circle cx="1271.8" cy="498" r="4"/><circle cx="1273.1" cy="498.9" r="4"/><circle cx="1274.4" cy="498.8" r="4"/><circle cx="1275.7" cy="498.3" r="4"/><circle cx="1277" cy="497.8" r="4"/><circle cx="1278.3" cy="498.3" r="4"/><circle cx="1279.6" cy="498.6" r="4"/><circle cx="1280.9" cy="497.8" r="4"/><circle cx="1282.2" cy="499" r="4"/><circle cx="1283.5" cy="497.9" r="4"/><circle cx="1284.8" cy="498.7" r="4"/><circle cx="1286.1" cy="498.9" r="4"/><circle cx="1287.4" cy="498.9" r="4"/><circle cx="1288.7" cy="498.7" r="4"/><circle cx="1290" cy="498" r="4"/><circle cx="1290.4" cy="498.9" r="4"/><circle cx="1290.6" cy="583.7" r="4"/><circle cx="1294.3" cy="575.5" r="4"/><circle cx="1319.1" cy="557.1" r="4"/><circle cx="1324.3" cy="575.5" r="4"/><circle cx="1355.3" cy="576.4" r="4"/><circle cx="1387.4" cy="556.6" r="4"/><circle cx="1389" cy="594.9" r="4"/></g><path d="M360 624.3L360 591.9L362 591.9L363.5 590.1L365 589.8L366.5 591L368 590.2L369.5 592.4L371 592.4L372.5 597.6L374 595.7L375.5 597.1L377 597.9L378.5 597.1L380 598L381.5 599.2L383 597.3L384.5 598.2L386 600.6L387.5 599.4L389 600L390.5 598.6L392 599.4L393.5 601.5L395 598.4L396.5 602.2L398 600.7L399.5 599L401 601.5L402.5 599.6L404 601.3L405.5 598.1L407 597.3L408.5 597.8L410 596.1L411.5 598.3L413 596.3L414.5 596.5L416 596.4L417.5 596.8L419 595L420.5 594.6L422 596.7L423.5 596L425 598.8L426.5 596.1L428 596.5L429.5 595.1L431 596.1L432.5 598.7L434 598.3L435.5 597.1L437 600L438.5 598L440 599.2L441.5 599.2L443 599.3L444.5 595.8L446 598.3L447.5 597.4L449 596.3L450.5 593.7L452 596.9L453.5 594.8L455 594L456.5 592.1L458 592.1L459.5 591.6L461 594.1L462.5 593.4L464 593.6L465.5 591.3L467 591.1L468.5 594.9L470 595.1L471.5 595.1L473 595.4L474.5 594.6L476 594.5L477.5 596.4L479 597.9L480.5 596.3L482 596.8L483.5 596.1L485 594.5L486.5 595.8L488 596.6L489.5 596.1L491 595.8L492.5 598.5L494 594.5L495.5 594.9L497 594.3L498.5 594.4L500 596.1L501.5 595.9L503 597.1L504.5 594.7L506 597.3L507.5 597.3L509 596.8L510.5 597.2L512 596.6L513.5 598.3L515 598.8L516.5 598.6L518 599.2L519.5 598.5L521 600.4L522.5 597L524 598.6L525.5 605.1L527 605L528.5 604.8L530 604.9L531.5 606.1L533 602.9L534.5 602.2L536 604.4L537.5 604.2L539 605.7L540.5 605.4L542 604L543.5 604L545 601.1L546.5 603.8L548 604.2L549.5 599.7L551 601.4L552.5 602.9L554 601L555.5 603.2L557 601L558.5 599L560 599.6L561.5 600.5L563 602.6L564.5 602.3L566 603.4L567.5 600.9L569 602.1L570.5 601.2L572 603.3L573.5 603.8L575 601.2L576.5 600.3L578 600.8L579.5 600.8L581 600.5L582.5 600.5L584 602.5L585.5 600.7L587 601L588.5 602L590 601.6L591.5 600L593 599.7L594.5 597.4L596 595.9L597.5 597.9L599 595.5L600.5 595.2L602 595.3L603.5 598L605 598.7L606.5 598.8L608 599.2L609.5 599.4L611 597.8L612.5 592.8L614 593.4L615.5 595.3L617 594.8L618.5 594.4L620 597.8L621.5 595.4L623 594.4L624.5 595L626 595.1L627.5 596.3L629 597.5L630.5 594.6L632 596.5L633.5 594.2L635 593.2L636.5 595.6L638 595.4L639.5 592.8L641 593.7L642.5 596.1L644 596.3L645.5 596.3L647 593L648.5 593.7L650 596.9L651.5 594.2L653 593.9L654.5 595.8L656 597.6L657.5 597.2L659 599.5L660.5 600.5L662 596.6L663.5 598.4L665 599.3L666.5 597.7L668 600.2L669.5 598.3L671 598.6L672.5 601.3L674 601.1L675.5 600.7L677 600.7L678.5 598.9L680 600.1L681.5 599.1L683 600.2L684.5 596.4L686 598.6L687.5 597.9L689 597.2L690.5 595.6L692 597.7L693.5 595.5L695 597.4L696.5 597.3L698 597.5L699.5 600L701 598.3L702.5 599.7L704 600.7L705.5 597.3L707 600.3L708.5 599.1L710 598.1L711.5 598.9L713 600L714.5 599L716 598.7L717.5 597.4L719 600.2L720.5 597.8L722 598.9L723.5 598.3L725 595.6L726.5 596.3L728 595.6L729.5 594.3L731 593.2L732.5 594.9L734 593.8L735.5 594L737 593.8L738.5 592.9L740 593.9L741.5 593.5L743 593.9L744.5 591.9L746 593.2L747.5 592.6L749 592.6L750.5 595.9L752 594.8L753.5 593.4L755 594.1L756.5 597.4L758 597.6L759.5 596.3L761 598L762.5 597.2L764 597.9L765.5 595.1L767 594.4L768.5 593.7L770 596.8L771.5 594.1L773 594.1L774.5 596.2L776 592.6L777.5 592.1L779 595.3L780.5 592L782 594.5L783.5 594.2L785 592L786.5 593L788 596.3L789.5 595.4L791 595.4L792.5 596.6L794 597.7L795.5 597.7L797 596.3L798.5 599.9L800 597.9L801.5 598.8L803 601.1L804.5 599.9L806 598.8L807.5 599.4L809 601.5L810.5 597.4L812 598.2L813.5 597.2L815 601L816.5 600L818 600.8L819.5 597.2L821 599.3L822.5 599.7L824 598.1L825.5 595.8L827 596.1L828.5 598.5L830 599L831.5 595.6L833 597.2L834.5 596.8L836 599.8L837.5 600.1L839 597.5L840.5 599L842 600.8L843.5 597.2L845 598.8L846.5 598.2L848 601.5L849.5 598.1L851 601.7L852.5 598L854 599.7L855.5 600L857 598.8L858.5 596.7L860 599.3L861.5 599.5L863 597.3L864.5 598.1L866 598.2L867.5 597.5L869 597.6L870.5 596.6L872 595.7L873.5 595.5L875 593.2L876.5 595.2L878 594.2L879.5 595.7L881 595L882.5 596.6L884 595.7L885.5 597L887 594L888.5 595L890 596.9L891.5 595.8L893 593.9L894.5 597.8L896 594.6L897.5 596.4L899 596.1L900.5 594.5L902 596.4L903.5 595.7L905 594.7L906.5 593.1L908 595.7L909.5 593.2L911 593.5L912.5 593.5L914 594.3L915.5 594.4L917 595.6L918.5 595.2L920 595.5L921.5 592.5L923 594.8L924.5 595.5L926 596.1L927.5 593L929 593.3L930.5 594.6L932 596.8L933.5 597.5L935 597.7L936.5 597.4L938 599.2L939.5 598.2L941 599.4L942.5 596.5L944 596.6L945.5 598.7L947 600.1L948.5 596.9L950 599.8L951.5 599.4L953 600.9L954.5 599L956 598.3L957.5 598L959 599.1L960.5 597.6L962 599.7L963.5 598.4L965 599.1L966.5 597.7L968 599.4L969.5 599.6L971 598.5L972.5 599L974 597.6L975.5 598.2L977 597.5L978.5 598.2L980 598.2L981.5 597.8L983 600.2L984.5 600.7L986 597.9L987.5 601.7L989 599.2L990.5 599.5L992 602L993.5 598.3L995 597.7L996.5 598.6L998 597.7L999.5 597L1001 599.5L1002.5 597.3L1004 597L1005.5 595.1L1007 594.8L1008.5 594.3L1010 595.1L1011.5 593.4L1013 594.2L1014.5 594L1016 596.1L1017.5 597L1019 596.6L1020.5 595.7L1022 597L1023.5 593.9L1025 595.3L1026.5 595.2L1028 595.4L1029.5 595.3L1031 596.3L1032.5 598.6L1034 595L1035.5 595.3L1037 596.3L1038.5 596L1040 595.3L1041.5 597.7L1043 594.4L1044.5 596.3L1046 596.8L1047.5 595.6L1049 593.2L1050.5 595.2L1052 592.6L1053.5 591.3L1055 593.3L1056.5 593.7L1058 593.2L1059.5 592.4L1061 592.1L1062.5 593L1064 593.1L1065.5 596L1067 596.1L1068.5 596L1070 594.2L1071.5 596.7L1073 595.9L1074.5 598.9L1076 599L1077.5 598.5L1079 596.9L1080.5 597.1L1082 597.3L1083.5 599.2L1085.5 599.2L1085.5 624.3zM1092.5 624.3L1092.5 608.8L1094.5 608.8L1096 611.2L1097.5 608.2L1099 607.9L1100.5 608.9L1102 610.9L1103.5 608.7L1105 609.1L1106.5 606.4L1108 609.9L1109.5 606.5L1111 605.7L1112.5 606.8L1114 606.3L1115.5 609L1117 605.3L1118.5 607.5L1120 605.3L1121.5 605.5L1123 608.9L1124.5 606.1L1126 605.4L1127.5 609.4L1129 608.2L1130.5 606.4L1132 609.2L1133.5 606L1135 609L1136.5 606.7L1138 609.8L1139.5 608.4L1141 606.6L1142.5 610L1144 609.9L1145.5 608.9L1147 609.9L1148.5 611.3L1150 610.8L1151.5 611L1153 607.5L1154.5 608.7L1156 607.8L1157.5 611.1L1159 608.3L1160.5 611.3L1162 609.4L1163.5 608.8L1165 610L1166.5 607.6L1168 608.9L1169.5 608.6L1171 607.1L1172.5 610.3L1174 606L1175.5 607.4L1177 608.1L1178.5 606.1L1180 608.2L1181.5 604.7L1183 606.3L1184.5 607L1186 605L1187.5 606.2L1189 607.2L1190.5 604.5L1192 607.5L1193.5 603.9L1195 606.4L1196.5 604.6L1198 602.9L1199.5 604.7L1201 604.3L1202.5 605.9L1204 607.3L1205.5 607.2L1207 606.7L1208.5 604.6L1210 605.4L1211.5 605.1L1213 603.4L1214.5 606.9L1216 606.4L1217.5 604.5L1219 607.3L1220.5 607.4L1222 605.7L1223.5 606.8L1225 605.6L1226.5 606.1L1228 604.3L1229.5 604.1L1231 605.7L1232.5 603.6L1234 604.1L1235.5 605.4L1237 601.5L1238.5 604.4L1240 604.5L1241.5 604.5L1243 601.8L1244.5 600.5L1246 600.6L1247.5 602L1249 602.4L1250.5 603.5L1252 600.5L1253.5 600.7L1255 601.6L1256.5 600.2L1258 601.1L1259.5 598.8L1261 599.8L1262.5 602.1L1264 599.3L1265.5 603.3L1267 601.3L1268.5 602L1270 603L1271.5 604L1273 601L1274.5 604.7L1276 602.5L1277.5 600.9L1279 604.7L1280.5 604.6L1282 602.9L1283.5 603.4L1285 602.9L1286.5 602.1L1288 605L1289.5 604.3L1291 602.5L1292.5 603.4L1294 599.3L1295.5 599.6L1297 599.7L1298.5 602.6L1300 598.6L1301.5 598.8L1303 599.9L1304.5 598.4L1306 599.5L1307.5 600.3L1309 600.6L1310.5 599.8L1312 600.4L1313.5 598.8L1315 596.7L1316.5 596.8L1318 595.9L1319.5 596.2L1321 598L1322.5 596.5L1324 596.8L1325.5 595L1327 595.9L1328.5 596.9L1330 594.9L1331.5 593.2L1333 596.4L1334.5 593.2L1336 596.8L1337.5 595.5L1339 595.4L1340.5 597.3L1342 596.5L1343.5 597.4L1345 599.2L1346.5 596.5L1348 598.6L1349.5 598.5L1351 594.9L1352.5 595.5L1354 594.4L1355.5 593.8L1357 591.5L1358.5 593L1360 590.5L1361.5 590.4L1363 589L1364.5 590.3L1366 588.5L1367.5 588.7L1369 589.7L1370.5 589.9L1372 588.1L1373.5 590.7L1375 587.2L1376.5 591L1378 592.1L1379.5 592.3L1381 589.3L1382.5 592.7L1384 594.4L1385.5 595.7L1387 596.5L1388.5 600.8L1390 601.1L1391.5 600.8L1393.5 600.8L1393.5 624.3z" fill="#2f7ed8"/><path d="M364.2 608.5V414.5M372 608.5V583.7M412.6 608.5V575.5M460.7 608.5V571.5M475.8 608.5V578.7M492.4 608.5V430.8M497.2 608.5V533.2M506 608.5V587.7M548.8 608.5V431.7M595.8 608.5V587.7M612.6 608.5V424M619.6 608.5V559.3M626 608.5V588.2M1144.5 608.5V572.4M1219.3 608.5V541.3M1233.3 608.5V448.8M1320.5 608.5V427.2M1327 608.5V571.5M1347.4 608.5V249.9M1348.2 608.5V387.5M1349.5 608.5V401M1370.5 608.5V560.7M1380.8 608.5V557.5M1384 608.5V421.8M461.3 608.5V583.3M625.6 608.5V592.3M568.4 608.5V596.1M384.4 608.5V592.8M623.2 608.5V591M533.2 608.5V596.2M529.3 608.5V595.6M524.5 608.5V594.8M534.3 608.5V594.7M624 608.5V588.6M582.5 608.5V594.5M463.2 608.5V584.1M625.1 608.5V587.3M563.5 608.5V595.6M553.8 608.5V594.9M506.1 608.5V591.7M573.3 608.5V597.4M587.8 608.5V593.5M630.5 608.5V586.4M415.2 608.5V588M1126.7 608.5V588.9M1220.3 608.5V596.6M1102.2 608.5V587.7M1224.6 608.5V594.4M1119.3 608.5V595.4M1144.4 608.5V589.4M1165.8 608.5V595.3M1271.8 608.5V589.2M1131.9 608.5V588.3M1215.6 608.5V589.3M1227 608.5V588.3M1249.7 608.5V588.8M1137.5 608.5V590.2M1200.9 608.5V589.7M1183.3 608.5V588.4M1205.5 608.5V594.2M1144.5 608.5V595.4M1193.7 608.5V596.2M1188.7 608.5V595.4M1193.4 608.5V592M1202.5 608.5V588.6M1101.3 608.5V588.8M1188.9 608.5V591.4M1226.4 608.5V588.8M1171.2 608.5V592.8M1282.5 608.5V596M1221 608.5V590.7M1105.4 608.5V591M1229.7 608.5V587.9M1162.8 608.5V587.4M1197 608.5V592.2M1270.5 608.5V596.4M1236.5 608.5V590.8M1164.3 608.5V588.6M1328.1 608.5V587.8M1344.7 608.5V586.8M1311.9 608.5V590.8M1333.9 608.5V586M1376 608.5V583.5M1376.1 608.5V582.1M1342.4 608.5V593M1342.7 608.5V584.4M1358.1 608.5V581.2M1324.4 608.5V590.3M1321.1 608.5V587.5M1356 608.5V582.4M1294.2 608.5V590M1382.1 608.5V582.9M1295.2 608.5V595M1290.6 608.5V597M1385.8 608.5V584.1M1358.4 608.5V581M1384.6 608.5V583.4M1354.1 608.5V585.3M1362.4 608.5V581.3M1360.8 608.5V586.8M1359.4 608.5V584.6M1369.3 608.5V585.3M1308.9 608.5V596.1M1370.6 608.5V575.3M1358.2 608.5V586.3M1375.6 608.5V577.3M1348.5 608.5V592.3M1321.4 608.5V589.5M1323.1 608.5V589.1M1356.7 608.5V580.2M1295.7 608.5V591.7M1294.1 608.5V597.4M1374.3 608.5V579.6M1385.5 608.5V585.9M1291.5 608.5V594.5M1351.6 608.5V582.8M1392 608.5V593.7M1332.9 608.5V591.6M1357 608.5V588.8M1305.8 608.5V596.8M1290.5 608.5V591M1302.7 608.5V585.7M1299.2 608.5V587.5M1303.4 608.5V597.2M1364.8 608.5V584.7M1366.3 608.5V584.8M1295.2 608.5V589.2M1364.2 608.5V577.4M1365.9 608.5V586.2M1355.4 608.5V583.7M1337.9 608.5V580.8M1316.4 608.5V583.7M1364.6 608.5V587.6M1291.5 608.5V591.3M1375 608.5V585.8M1322.4 608.5V585.6M1307.3 608.5V586.3M1340.6 608.5V595.4M1084.3 608.5V534M1084.7 608.5V523.2M1083.2 608.5V510.4M1084.3 608.5V526.6M1085.6 608.5V550.6M1084.4 608.5V511.6M1087.2 608.5V511.8M1085.3 608.5V564M1082.8 608.5V491.7M1086 608.5V507.2M1084.2 608.5V530.7M1087.4 608.5V506.8M1085.5 608.5V562.2M1084.6 608.5V500.8M1084.4 608.5V522.4M1085.5 608.5V500M1086.5 608.5V564.9M1082.5 608.5V567.1M1084.6 608.5V532.8M1086.6 608.5V500.9M1082.7 608.5V506.6M1086.6 608.5V503M1085.4 608.5V565.9M1086.8 608.5V509.4M1085.9 608.5V498.1M1084.2 608.5V585.9M1085.3 608.5V510.4M1083.5 608.5V515.4M1087.2 608.5V570.1M1085.5 608.5V523.1M1084.8 608.5V573M1083.8 608.5V515.3M1086.5 608.5V546.2M1082.9 608.5V509.5M1096.7 608.5V569.4M1096 608.5V509.5M1097.1 608.5V543.4M1095.7 608.5V537.3M1094.7 608.5V573.1M1094.6 608.5V527.2M1095.3 608.5V539.5M1095.4 608.5V543.8M1094.5 608.5V586.4M1097.5 608.5V556.7M1094.4 608.5V533.4M1096.8 608.5V576.3M1096.1 608.5V559.3M1095.8 608.5V588.6M1094.1 608.5V501.1M1097 608.5V546.6M1096 608.5V566.8M1096.7 608.5V552M1097.3 608.5V521.2M1096.9 608.5V503.5M1096.5 608.5V598.6M1096.2 608.5V595.4M1095.5 608.5V598.3M1098.3 608.5V579.8M1097.7 608.5V578.1M1100.5 608.5V598" stroke="#2f7ed8" stroke-width="2" fill="none"/><path d="M362 588.2l4 4l-4 4l-4 -4zM363.5 586.2l4 4l-4 4l-4 -4zM365 586l4 4l-4 4l-4 -4zM366.5 586.3l4 4l-4 4l-4 -4zM368 587.4l4 4l-4 4l-4 -4zM369.5 587.9l4 4l-4 4l-4 -4zM371 589.9l4 4l-4 4l-4 -4zM372.5 594.9l4 4l-4 4l-4 -4zM374 590.7l4 4l-4 4l-4 -4zM375.5 593.2l4 4l-4 4l-4 -4zM377 595l4 4l-4 4l-4 -4zM378.5 594.5l4 4l-4 4l-4 -4zM380 594.2l4 4l-4 4l-4 -4zM381.5 594.8l4 4l-4 4l-4 -4zM383 592.9l4 4l-4 4l-4 -4zM384.5 595.5l4 4l-4 4l-4 -4zM386 596.1l4 4l-4 4l-4 -4zM387.5 595.9l4 4l-4 4l-4 -4zM389 595.3l4 4l-4 4l-4 -4zM390.5 594.9l4 4l-4 4l-4 -4zM392 596.8l4 4l-4 4l-4 -4zM393.5 596.8l4 4l-4 4l-4 -4zM395 595.4l4 4l-4 4l-4 -4zM396.5 598.5l4 4l-4 4l-4 -4zM398 597.9l4 4l-4 4l-4 -4zM399.5 595.7l4 4l-4 4l-4 -4zM401 597l4 4l-4 4l-4 -4zM402.5 596.9l4 4l-4 4l-4 -4zM404 597.5l4 4l-4 4l-4 -4zM405.5 593.2l4 4l-4 4l-4 -4zM407 592.3l4 4l-4 4l-4 -4zM408.5 594l4 4l-4 4l-4 -4zM410 592.2l4 4l-4 4l-4 -4zM411.5 594l4 4l-4 4l-4 -4zM413 591.6l4 4l-4 4l-4 -4zM414.5 592.4l4 4l-4 4l-4 -4zM416 592.2l4 4l-4 4l-4 -4zM417.5 593.9l4 4l-4 4l-4 -4zM419 590l4 4l-4 4l-4 -4zM420.5 591.4l4 4l-4 4l-4 -4zM422 593.8l4 4l-4 4l-4 -4zM423.5 591.3l4 4l-4 4l-4 -4zM425 596.1l4 4l-4 4l-4 -4zM426.5 592.9l4 4l-4 4l-4 -4zM428 593.8l4 4l-4 4l-4 -4zM429.5 590.9l4 4l-4 4l-4 -4zM431 592l4 4l-4 4l-4 -4zM432.5 594.6l4 4l-4 4l-4 -4zM434 595.8l4 4l-4 4l-4 -4zM435.5 593.6l4 4l-4 4l-4 -4zM437 595.9l4 4l-4 4l-4 -4zM438.5 594.1l4 4l-4 4l-4 -4zM440 594.9l4 4l-4 4l-4 -4zM441.5 594.4l4 4l-4 4l-4 -4zM443 594.5l4 4l-4 4l-4 -4zM444.5 592.9l4 4l-4 4l-4 -4zM446 594l4 4l-4 4l-4 -4zM447.5 594.7l4 4l-4 4l-4 -4zM449 592l4 4l-4 4l-4 -4zM450.5 589.4l4 4l-4 4l-4 -4zM452 593.2l4 4l-4 4l-4 -4zM453.5 590.3l4 4l-4 4l-4 -4zM455 589.9l4 4l-4 4l-4 -4zM456.5 589.5l4 4l-4 4l-4 -4zM458 589.3l4 4l-4 4l-4 -4zM459.5 588.7l4 4l-4 4l-4 -4zM461 590.7l4 4l-4 4l-4 -4zM462.5 590.7l4 4l-4 4l-4 -4zM464 591l4 4l-4 4l-4 -4zM465.5 587.7l4 4l-4 4l-4 -4zM467 587.9l4 4l-4 4l-4 -4zM468.5 590.1l4 4l-4 4l-4 -4zM470 591.9l4 4l-4 4l-4 -4zM471.5 591.2l4 4l-4 4l-4 -4zM473 592.3l4 4l-4 4l-4 -4zM474.5 591.3l4 4l-4 4l-4 -4zM476 590.3l4 4l-4 4l-4 -4zM477.5 591.5l4 4l-4 4l-4 -4zM479 595.2l4 4l-4 4l-4 -4zM480.5 591.6l4 4l-4 4l-4 -4zM482 592.9l4 4l-4 4l-4 -4zM483.5 591.9l4 4l-4 4l-4 -4zM485 590.2l4 4l-4 4l-4 -4zM486.5 592.6l4 4l-4 4l-4 -4zM488 594l4 4l-4 4l-4 -4zM489.5 591.8l4 4l-4 4l-4 -4zM491 592.4l4 4l-4 4l-4 -4zM492.5 594.2l4 4l-4 4l-4 -4zM494 590.9l4 4l-4 4l-4 -4zM495.5 590.9l4 4l-4 4l-4 -4zM497 589.7l4 4l-4 4l-4 -4zM498.5 589.8l4 4l-4 4l-4 -4zM500 591.6l4 4l-4 4l-4 -4zM501.5 593.2l4 4l-4 4l-4 -4zM503 593.4l4 4l-4 4l-4 -4zM504.5 590.2l4 4l-4 4l-4 -4zM506 594.5l4 4l-4 4l-4 -4zM507.5 594.8l4 4l-4 4l-4 -4zM509 592.9l4 4l-4 4l-4 -4zM510.5 592.5l4 4l-4 4l-4 -4zM512 592.1l4 4l-4 4l-4 -4zM513.5 593.5l4 4l-4 4l-4 -4zM515 594.7l4 4l-4 4l-4 -4zM516.5 593.8l4 4l-4 4l-4 -4zM518 594.8l4 4l-4 4l-4 -4zM519.5 594.1l4 4l-4 4l-4 -4zM521 596.9l4 4l-4 4l-4 -4zM522.5 594.3l4 4l-4 4l-4 -4zM524 595.5l4 4l-4 4l-4 -4zM525.5 601.2l4 4l-4 4l-4 -4zM527 601l4 4l-4 4l-4 -4zM528.5 601.1l4 4l-4 4l-4 -4zM530 600.9l4 4l-4 4l-4 -4zM531.5 602l4 4l-4 4l-4 -4zM533 598l4 4l-4 4l-4 -4zM534.5 597.9l4 4l-4 4l-4 -4zM536 601.9l4 4l-4 4l-4 -4zM537.5 599.5l4 4l-4 4l-4 -4zM539 602l4 4l-4 4l-4 -4zM540.5 602l4 4l-4 4l-4 -4zM542 601.2l4 4l-4 4l-4 -4zM543.5 599.6l4 4l-4 4l-4 -4zM545 596.8l4 4l-4 4l-4 -4zM546.5 599.5l4 4l-4 4l-4 -4zM548 600.1l4 4l-4 4l-4 -4zM549.5 595.8l4 4l-4 4l-4 -4zM551 598.7l4 4l-4 4l-4 -4zM552.5 600l4 4l-4 4l-4 -4zM554 598.2l4 4l-4 4l-4 -4zM555.5 598.3l4 4l-4 4l-4 -4zM557 596.1l4 4l-4 4l-4 -4zM558.5 595.8l4 4l-4 4l-4 -4zM560 596.8l4 4l-4 4l-4 -4zM561.5 596.7l4 4l-4 4l-4 -4zM563 599.1l4 4l-4 4l-4 -4zM564.5 597.3l4 4l-4 4l-4 -4zM566 599.4l4 4l-4 4l-4 -4zM567.5 598.2l4 4l-4 4l-4 -4zM569 599.2l4 4l-4 4l-4 -4zM570.5 598.3l4 4l-4 4l-4 -4zM572 600.7l4 4l-4 4l-4 -4zM573.5 599.5l4 4l-4 4l-4 -4zM575 596.5l4 4l-4 4l-4 -4zM576.5 595.7l4 4l-4 4l-4 -4zM578 597.1l4 4l-4 4l-4 -4zM579.5 597.5l4 4l-4 4l-4 -4zM581 597.8l4 4l-4 4l-4 -4zM582.5 597.3l4 4l-4 4l-4 -4zM584 599.1l4 4l-4 4l-4 -4zM585.5 597.6l4 4l-4 4l-4 -4zM587 597.2l4 4l-4 4l-4 -4zM588.5 598.4l4 4l-4 4l-4 -4zM590 596.7l4 4l-4 4l-4 -4zM591.5 597l4 4l-4 4l-4 -4zM593 595.3l4 4l-4 4l-4 -4zM594.5 594.7l4 4l-4 4l-4 -4zM596 592.5l4 4l-4 4l-4 -4zM597.5 593.7l4 4l-4 4l-4 -4zM599 590.8l4 4l-4 4l-4 -4zM600.5 590.8l4 4l-4 4l-4 -4zM602 591.9l4 4l-4 4l-4 -4zM603.5 594.7l4 4l-4 4l-4 -4zM605 594l4 4l-4 4l-4 -4zM606.5 594l4 4l-4 4l-4 -4zM608 595.5l4 4l-4 4l-4 -4zM609.5 595.9l4 4l-4 4l-4 -4zM611 593.8l4 4l-4 4l-4 -4zM612.5 588.4l4 4l-4 4l-4 -4zM614 589.9l4 4l-4 4l-4 -4zM615.5 590.4l4 4l-4 4l-4 -4zM617 590.6l4 4l-4 4l-4 -4zM618.5 590.6l4 4l-4 4l-4 -4zM620 595.2l4 4l-4 4l-4 -4zM621.5 592l4 4l-4 4l-4 -4zM623 591.6l4 4l-4 4l-4 -4zM624.5 591.2l4 4l-4 4l-4 -4zM626 590.7l4 4l-4 4l-4 -4zM627.5 591.9l4 4l-4 4l-4 -4zM629 594.9l4 4l-4 4l-4 -4zM630.5 591.4l4 4l-4 4l-4 -4zM632 592.3l4 4l-4 4l-4 -4zM633.5 589.2l4 4l-4 4l-4 -4zM635 589.4l4 4l-4 4l-4 -4zM636.5 592.3l4 4l-4 4l-4 -4zM638 591.4l4 4l-4 4l-4 -4zM639.5 588.4l4 4l-4 4l-4 -4zM641 590.3l4 4l-4 4l-4 -4zM642.5 593.4l4 4l-4 4l-4 -4zM644 591.9l4 4l-4 4l-4 -4zM645.5 591.4l4 4l-4 4l-4 -4zM647 588.9l4 4l-4 4l-4 -4zM648.5 589.7l4 4l-4 4l-4 -4zM650 593.6l4 4l-4 4l-4 -4zM651.5 589.7l4 4l-4 4l-4 -4zM653 590.9l4 4l-4 4l-4 -4zM654.5 592.6l4 4l-4 4l-4 -4zM656 593.9l4 4l-4 4l-4 -4zM657.5 592.7l4 4l-4 4l-4 -4zM659 596.9l4 4l-4 4l-4 -4zM660.5 596.3l4 4l-4 4l-4 -4zM662 593.6l4 4l-4 4l-4 -4zM663.5 594l4 4l-4 4l-4 -4zM665 594.8l4 4l-4 4l-4 -4zM666.5 594.6l4 4l-4 4l-4 -4zM668 595.9l4 4l-4 4l-4 -4zM669.5 595.7l4 4l-4 4l-4 -4zM671 594.8l4 4l-4 4l-4 -4zM672.5 596.8l4 4l-4 4l-4 -4zM674 596.6l4 4l-4 4l-4 -4zM675.5 596.8l4 4l-4 4l-4 -4zM677 597.4l4 4l-4 4l-4 -4zM678.5 596.3l4 4l-4 4l-4 -4zM680 595.5l4 4l-4 4l-4 -4zM681.5 595.1l4 4l-4 4l-4 -4zM683 595.7l4 4l-4 4l-4 -4zM684.5 593.8l4 4l-4 4l-4 -4zM686 594l4 4l-4 4l-4 -4zM687.5 593l4 4l-4 4l-4 -4zM689 592.3l4 4l-4 4l-4 -4zM690.5 591.6l4 4l-4 4l-4 -4zM692 595l4 4l-4 4l-4 -4zM693.5 592.7l4 4l-4 4l-4 -4zM695 594.2l4 4l-4 4l-4 -4zM696.5 594.8l4 4l-4 4l-4 -4zM698 594.8l4 4l-4 4l-4 -4zM699.5 595.8l4 4l-4 4l-4 -4zM701 593.7l4 4l-4 4l-4 -4zM702.5 597l4 4l-4 4l-4 -4zM704 597.6l4 4l-4 4l-4 -4zM705.5 592.4l4 4l-4 4l-4 -4zM707 597l4 4l-4 4l-4 -4zM708.5 595.1l4 4l-4 4l-4 -4zM710 594l4 4l-4 4l-4 -4zM711.5 594.8l4 4l-4 4l-4 -4zM713 595.4l4 4l-4 4l-4 -4zM714.5 594l4 4l-4 4l-4 -4zM716 594.4l4 4l-4 4l-4 -4zM717.5 593.3l4 4l-4 4l-4 -4zM719 597.6l4 4l-4 4l-4 -4zM720.5 593.2l4 4l-4 4l-4 -4zM722 596.3l4 4l-4 4l-4 -4zM723.5 593.8l4 4l-4 4l-4 -4zM725 591.5l4 4l-4 4l-4 -4zM726.5 593.4l4 4l-4 4l-4 -4zM728 592.7l4 4l-4 4l-4 -4zM729.5 590.4l4 4l-4 4l-4 -4zM731 588.3l4 4l-4 4l-4 -4zM732.5 591.1l4 4l-4 4l-4 -4zM734 589.8l4 4l-4 4l-4 -4zM735.5 591.3l4 4l-4 4l-4 -4zM737 589.3l4 4l-4 4l-4 -4zM738.5 588.8l4 4l-4 4l-4 -4zM740 591.1l4 4l-4 4l-4 -4zM741.5 588.6l4 4l-4 4l-4 -4zM743 589.9l4 4l-4 4l-4 -4zM744.5 588.9l4 4l-4 4l-4 -4zM746 590.1l4 4l-4 4l-4 -4zM747.5 587.7l4 4l-4 4l-4 -4zM749 587.7l4 4l-4 4l-4 -4zM750.5 591.1l4 4l-4 4l-4 -4zM752 592.1l4 4l-4 4l-4 -4zM753.5 589l4 4l-4 4l-4 -4zM755 590.9l4 4l-4 4l-4 -4zM756.5 594.7l4 4l-4 4l-4 -4zM758 593.5l4 4l-4 4l-4 -4zM759.5 592l4 4l-4 4l-4 -4zM761 595.4l4 4l-4 4l-4 -4zM762.5 593.8l4 4l-4 4l-4 -4zM764 593.6l4 4l-4 4l-4 -4zM765.5 591.9l4 4l-4 4l-4 -4zM767 590.2l4 4l-4 4l-4 -4zM768.5 589.4l4 4l-4 4l-4 -4zM770 591.8l4 4l-4 4l-4 -4zM771.5 590.9l4 4l-4 4l-4 -4zM773 591.4l4 4l-4 4l-4 -4zM774.5 592.8l4 4l-4 4l-4 -4zM776 590l4 4l-4 4l-4 -4zM777.5 587.1l4 4l-4 4l-4 -4zM779 590.9l4 4l-4 4l-4 -4zM780.5 588.2l4 4l-4 4l-4 -4zM782 591.9l4 4l-4 4l-4 -4zM783.5 591.5l4 4l-4 4l-4 -4zM785 588l4 4l-4 4l-4 -4zM786.5 588.6l4 4l-4 4l-4 -4zM788 592.3l4 4l-4 4l-4 -4zM789.5 591.6l4 4l-4 4l-4 -4zM791 592.7l4 4l-4 4l-4 -4zM792.5 592.1l4 4l-4 4l-4 -4zM794 594.7l4 4l-4 4l-4 -4zM795.5 594.5l4 4l-4 4l-4 -4zM797 593.4l4 4l-4 4l-4 -4zM798.5 596.9l4 4l-4 4l-4 -4zM800 594.5l4 4l-4 4l-4 -4zM801.5 594.7l4 4l-4 4l-4 -4zM803 596.9l4 4l-4 4l-4 -4zM804.5 595.8l4 4l-4 4l-4 -4zM806 595.8l4 4l-4 4l-4 -4zM807.5 594.6l4 4l-4 4l-4 -4zM809 597l4 4l-4 4l-4 -4zM810.5 594.2l4 4l-4 4l-4 -4zM812 593.8l4 4l-4 4l-4 -4zM813.5 592.4l4 4l-4 4l-4 -4zM815 596l4 4l-4 4l-4 -4zM816.5 596.4l4 4l-4 4l-4 -4zM818 596.6l4 4l-4 4l-4 -4zM819.5 594.7l4 4l-4 4l-4 -4zM821 596.5l4 4l-4 4l-4 -4zM822.5 597.1l4 4l-4 4l-4 -4zM824 593.8l4 4l-4 4l-4 -4zM825.5 591l4 4l-4 4l-4 -4zM827 591.3l4 4l-4 4l-4 -4zM828.5 594.8l4 4l-4 4l-4 -4zM830 595.8l4 4l-4 4l-4 -4zM831.5 591.7l4 4l-4 4l-4 -4zM833 592.8l4 4l-4 4l-4 -4zM834.5 592.9l4 4l-4 4l-4 -4zM836 596.3l4 4l-4 4l-4 -4zM837.5 596.8l4 4l-4 4l-4 -4zM839 594.4l4 4l-4 4l-4 -4zM840.5 596.1l4 4l-4 4l-4 -4zM842 597.5l4 4l-4 4l-4 -4zM843.5 592.5l4 4l-4 4l-4 -4zM845 595.9l4 4l-4 4l-4 -4zM846.5 593.9l4 4l-4 4l-4 -4zM848 598l4 4l-4 4l-4 -4zM849.5 594.1l4 4l-4 4l-4 -4zM851 598.5l4 4l-4 4l-4 -4zM852.5 593.5l4 4l-4 4l-4 -4zM854 595.3l4 4l-4 4l-4 -4zM855.5 595.6l4 4l-4 4l-4 -4zM857 594.2l4 4l-4 4l-4 -4zM858.5 594l4 4l-4 4l-4 -4zM860 595.8l4 4l-4 4l-4 -4zM861.5 595.3l4 4l-4 4l-4 -4zM863 593.3l4 4l-4 4l-4 -4zM864.5 595.6l4 4l-4 4l-4 -4zM866 594.5l4 4l-4 4l-4 -4zM867.5 593.1l4 4l-4 4l-4 -4zM869 594.6l4 4l-4 4l-4 -4zM870.5 593.2l4 4l-4 4l-4 -4zM872 593.2l4 4l-4 4l-4 -4zM873.5 590.7l4 4l-4 4l-4 -4zM875 589.4l4 4l-4 4l-4 -4zM876.5 592.3l4 4l-4 4l-4 -4zM878 591.3l4 4l-4 4l-4 -4zM879.5 593l4 4l-4 4l-4 -4zM881 590.1l4 4l-4 4l-4 -4zM882.5 592.3l4 4l-4 4l-4 -4zM884 591l4 4l-4 4l-4 -4zM885.5 592.4l4 4l-4 4l-4 -4zM887 591.4l4 4l-4 4l-4 -4zM888.5 591.5l4 4l-4 4l-4 -4zM890 594.2l4 4l-4 4l-4 -4zM891.5 591.7l4 4l-4 4l-4 -4zM893 591.1l4 4l-4 4l-4 -4zM894.5 593.9l4 4l-4 4l-4 -4zM896 590.3l4 4l-4 4l-4 -4zM897.5 593.4l4 4l-4 4l-4 -4zM899 593.5l4 4l-4 4l-4 -4zM900.5 589.8l4 4l-4 4l-4 -4zM902 592.9l4 4l-4 4l-4 -4zM903.5 592.2l4 4l-4 4l-4 -4zM905 590.2l4 4l-4 4l-4 -4zM906.5 589l4 4l-4 4l-4 -4zM908 591l4 4l-4 4l-4 -4zM909.5 588.7l4 4l-4 4l-4 -4zM911 589.1l4 4l-4 4l-4 -4zM912.5 590l4 4l-4 4l-4 -4zM914 591l4 4l-4 4l-4 -4zM915.5 589.9l4 4l-4 4l-4 -4zM917 590.6l4 4l-4 4l-4 -4zM918.5 591l4 4l-4 4l-4 -4zM920 592.2l4 4l-4 4l-4 -4zM921.5 588l4 4l-4 4l-4 -4zM923 590.6l4 4l-4 4l-4 -4zM924.5 591l4 4l-4 4l-4 -4zM926 593.1l4 4l-4 4l-4 -4zM927.5 589.4l4 4l-4 4l-4 -4zM929 588.4l4 4l-4 4l-4 -4zM930.5 589.9l4 4l-4 4l-4 -4zM932 592.8l4 4l-4 4l-4 -4zM933.5 593.8l4 4l-4 4l-4 -4zM935 594.3l4 4l-4 4l-4 -4zM936.5 592.6l4 4l-4 4l-4 -4zM938 594.6l4 4l-4 4l-4 -4zM939.5 595l4 4l-4 4l-4 -4zM941 595.4l4 4l-4 4l-4 -4zM942.5 592.2l4 4l-4 4l-4 -4zM944 592.4l4 4l-4 4l-4 -4zM945.5 596.1l4 4l-4 4l-4 -4zM947 595.9l4 4l-4 4l-4 -4zM948.5 593.3l4 4l-4 4l-4 -4zM950 595.6l4 4l-4 4l-4 -4zM951.5 595.5l4 4l-4 4l-4 -4zM953 598l4 4l-4 4l-4 -4zM954.5 596.5l4 4l-4 4l-4 -4zM956 594.2l4 4l-4 4l-4 -4zM957.5 593.5l4 4l-4 4l-4 -4zM959 596l4 4l-4 4l-4 -4zM960.5 593.1l4 4l-4 4l-4 -4zM962 594.7l4 4l-4 4l-4 -4zM963.5 595.7l4 4l-4 4l-4 -4zM965 595.2l4 4l-4 4l-4 -4zM966.5 594.8l4 4l-4 4l-4 -4zM968 595.4l4 4l-4 4l-4 -4zM969.5 596.8l4 4l-4 4l-4 -4zM971 594.6l4 4l-4 4l-4 -4zM972.5 594.4l4 4l-4 4l-4 -4zM974 592.7l4 4l-4 4l-4 -4zM975.5 594.5l4 4l-4 4l-4 -4zM977 594.1l4 4l-4 4l-4 -4zM978.5 595.5l4 4l-4 4l-4 -4zM980 593.5l4 4l-4 4l-4 -4zM981.5 594.3l4 4l-4 4l-4 -4zM983 596.2l4 4l-4 4l-4 -4zM984.5 597l4 4l-4 4l-4 -4zM986 593.3l4 4l-4 4l-4 -4zM987.5 597.4l4 4l-4 4l-4 -4zM989 595.5l4 4l-4 4l-4 -4zM990.5 596.8l4 4l-4 4l-4 -4zM992 597.3l4 4l-4 4l-4 -4zM993.5 594.5l4 4l-4 4l-4 -4zM995 594.7l4 4l-4 4l-4 -4zM996.5 596l4 4l-4 4l-4 -4zM998 593.2l4 4l-4 4l-4 -4zM999.5 592.3l4 4l-4 4l-4 -4zM1001 596.9l4 4l-4 4l-4 -4zM1002.5 594.8l4 4l-4 4l-4 -4zM1004 593.2l4 4l-4 4l-4 -4zM1005.5 590.2l4 4l-4 4l-4 -4zM1007 592.1l4 4l-4 4l-4 -4zM1008.5 590.3l4 4l-4 4l-4 -4zM1010 592.4l4 4l-4 4l-4 -4zM1011.5 590l4 4l-4 4l-4 -4zM1013 591.3l4 4l-4 4l-4 -4zM1014.5 589.4l4 4l-4 4l-4 -4zM1016 593l4 4l-4 4l-4 -4zM1017.5 592.5l4 4l-4 4l-4 -4zM1019 592.6l4 4l-4 4l-4 -4zM1020.5 592.8l4 4l-4 4l-4 -4zM1022 594l4 4l-4 4l-4 -4zM1023.5 589.3l4 4l-4 4l-4 -4zM1025 590.8l4 4l-4 4l-4 -4zM1026.5 591.2l4 4l-4 4l-4 -4zM1028 591.7l4 4l-4 4l-4 -4zM1029.5 591.3l4 4l-4 4l-4 -4zM1031 591.6l4 4l-4 4l-4 -4zM1032.5 594.2l4 4l-4 4l-4 -4zM1034 591.9l4 4l-4 4l-4 -4zM1035.5 592.5l4 4l-4 4l-4 -4zM1037 591.4l4 4l-4 4l-4 -4zM1038.5 592.4l4 4l-4 4l-4 -4zM1040 592.2l4 4l-4 4l-4 -4zM1041.5 592.8l4 4l-4 4l-4 -4zM1043 591.5l4 4l-4 4l-4 -4zM1044.5 591.6l4 4l-4 4l-4 -4zM1046 593.3l4 4l-4 4l-4 -4zM1047.5 592l4 4l-4 4l-4 -4zM1049 589.7l4 4l-4 4l-4 -4zM1050.5 591l4 4l-4 4l-4 -4zM1052 588.6l4 4l-4 4l-4 -4zM1053.5 587.7l4 4l-4 4l-4 -4zM1055 589.4l4 4l-4 4l-4 -4zM1056.5 590.3l4 4l-4 4l-4 -4zM1058 589.4l4 4l-4 4l-4 -4zM1059.5 588.5l4 4l-4 4l-4 -4zM1061 587.2l4 4l-4 4l-4 -4zM1062.5 589.5l4 4l-4 4l-4 -4zM1064 589.4l4 4l-4 4l-4 -4zM1065.5 591.6l4 4l-4 4l-4 -4zM1067 593l4 4l-4 4l-4 -4zM1068.5 593l4 4l-4 4l-4 -4zM1070 590.4l4 4l-4 4l-4 -4zM1071.5 592.1l4 4l-4 4l-4 -4zM1073 592.1l4 4l-4 4l-4 -4zM1074.5 594.1l4 4l-4 4l-4 -4zM1076 594.4l4 4l-4 4l-4 -4zM1077.5 594.5l4 4l-4 4l-4 -4zM1079 592.2l4 4l-4 4l-4 -4zM1080.5 593.2l4 4l-4 4l-4 -4zM1082 593.6l4 4l-4 4l-4 -4zM1083.5 594.3l4 4l-4 4l-4 -4zM1094.5 605.7l4 4l-4 4l-4 -4zM1096 606.4l4 4l-4 4l-4 -4zM1097.5 604.7l4 4l-4 4l-4 -4zM1099 603.8l4 4l-4 4l-4 -4zM1100.5 606l4 4l-4 4l-4 -4zM1102 607.9l4 4l-4 4l-4 -4zM1103.5 605.9l4 4l-4 4l-4 -4zM1105 604.3l4 4l-4 4l-4 -4zM1106.5 603.5l4 4l-4 4l-4 -4zM1108 607.2l4 4l-4 4l-4 -4zM1109.5 603.9l4 4l-4 4l-4 -4zM1111 601l4 4l-4 4l-4 -4zM1112.5 602.3l4 4l-4 4l-4 -4zM1114 601.6l4 4l-4 4l-4 -4zM1115.5 604.1l4 4l-4 4l-4 -4zM1117 602.5l4 4l-4 4l-4 -4zM1118.5 604.5l4 4l-4 4l-4 -4zM1120 601.9l4 4l-4 4l-4 -4zM1121.5 602.5l4 4l-4 4l-4 -4zM1123 605.4l4 4l-4 4l-4 -4zM1124.5 601.8l4 4l-4 4l-4 -4zM1126 600.7l4 4l-4 4l-4 -4zM1127.5 604.6l4 4l-4 4l-4 -4zM1129 605.1l4 4l-4 4l-4 -4zM1130.5 601.9l4 4l-4 4l-4 -4zM1132 605l4 4l-4 4l-4 -4zM1133.5 602.1l4 4l-4 4l-4 -4zM1135 604l4 4l-4 4l-4 -4zM1136.5 602.3l4 4l-4 4l-4 -4zM1138 605.5l4 4l-4 4l-4 -4zM1139.5 605.2l4 4l-4 4l-4 -4zM1141 602.6l4 4l-4 4l-4 -4zM1142.5 605.8l4 4l-4 4l-4 -4zM1144 607.3l4 4l-4 4l-4 -4zM1145.5 605.2l4 4l-4 4l-4 -4zM1147 607.1l4 4l-4 4l-4 -4zM1148.5 607.9l4 4l-4 4l-4 -4zM1150 605.8l4 4l-4 4l-4 -4zM1151.5 607l4 4l-4 4l-4 -4zM1153 603.6l4 4l-4 4l-4 -4zM1154.5 605.7l4 4l-4 4l-4 -4zM1156 603.7l4 4l-4 4l-4 -4zM1157.5 607.9l4 4l-4 4l-4 -4zM1159 604.6l4 4l-4 4l-4 -4zM1160.5 606.8l4 4l-4 4l-4 -4zM1162 606.5l4 4l-4 4l-4 -4zM1163.5 604.1l4 4l-4 4l-4 -4zM1165 607l4 4l-4 4l-4 -4zM1166.5 603l4 4l-4 4l-4 -4zM1168 603.9l4 4l-4 4l-4 -4zM1169.5 604.2l4 4l-4 4l-4 -4zM1171 604l4 4l-4 4l-4 -4zM1172.5 607.7l4 4l-4 4l-4 -4zM1174 601l4 4l-4 4l-4 -4zM1175.5 603.6l4 4l-4 4l-4 -4zM1177 604.4l4 4l-4 4l-4 -4zM1178.5 603l4 4l-4 4l-4 -4zM1180 603.6l4 4l-4 4l-4 -4zM1181.5 600.9l4 4l-4 4l-4 -4zM1183 602.1l4 4l-4 4l-4 -4zM1184.5 604.1l4 4l-4 4l-4 -4zM1186 600.6l4 4l-4 4l-4 -4zM1187.5 603.6l4 4l-4 4l-4 -4zM1189 603l4 4l-4 4l-4 -4zM1190.5 600.1l4 4l-4 4l-4 -4zM1192 604.3l4 4l-4 4l-4 -4zM1193.5 600.2l4 4l-4 4l-4 -4zM1195 601.6l4 4l-4 4l-4 -4zM1196.5 601.1l4 4l-4 4l-4 -4zM1198 598.1l4 4l-4 4l-4 -4zM1199.5 601.7l4 4l-4 4l-4 -4zM1201 601.1l4 4l-4 4l-4 -4zM1202.5 602.9l4 4l-4 4l-4 -4zM1204 603.9l4 4l-4 4l-4 -4zM1205.5 603.1l4 4l-4 4l-4 -4zM1207 602.7l4 4l-4 4l-4 -4zM1208.5 600.6l4 4l-4 4l-4 -4zM1210 602.7l4 4l-4 4l-4 -4zM1211.5 600.3l4 4l-4 4l-4 -4zM1213 600.6l4 4l-4 4l-4 -4zM1214.5 601.9l4 4l-4 4l-4 -4zM1216 602l4 4l-4 4l-4 -4zM1217.5 600.2l4 4l-4 4l-4 -4zM1219 604.6l4 4l-4 4l-4 -4zM1220.5 603.6l4 4l-4 4l-4 -4zM1222 601.7l4 4l-4 4l-4 -4zM1223.5 604l4 4l-4 4l-4 -4zM1225 601.2l4 4l-4 4l-4 -4zM1226.5 602.2l4 4l-4 4l-4 -4zM1228 600.6l4 4l-4 4l-4 -4zM1229.5 601l4 4l-4 4l-4 -4zM1231 602.6l4 4l-4 4l-4 -4zM1232.5 600.2l4 4l-4 4l-4 -4zM1234 599.9l4 4l-4 4l-4 -4zM1235.5 601.2l4 4l-4 4l-4 -4zM1237 596.9l4 4l-4 4l-4 -4zM1238.5 601.5l4 4l-4 4l-4 -4zM1240 601.2l4 4l-4 4l-4 -4zM1241.5 601.4l4 4l-4 4l-4 -4zM1243 597.2l4 4l-4 4l-4 -4zM1244.5 596.5l4 4l-4 4l-4 -4zM1246 597.5l4 4l-4 4l-4 -4zM1247.5 598.5l4 4l-4 4l-4 -4zM1249 597.7l4 4l-4 4l-4 -4zM1250.5 599.6l4 4l-4 4l-4 -4zM1252 597.7l4 4l-4 4l-4 -4zM1253.5 596.3l4 4l-4 4l-4 -4zM1255 597l4 4l-4 4l-4 -4zM1256.5 595.9l4 4l-4 4l-4 -4zM1258 597.8l4 4l-4 4l-4 -4zM1259.5 596l4 4l-4 4l-4 -4zM1261 595.2l4 4l-4 4l-4 -4zM1262.5 597.5l4 4l-4 4l-4 -4zM1264 594.9l4 4l-4 4l-4 -4zM1265.5 599.1l4 4l-4 4l-4 -4zM1267 597.6l4 4l-4 4l-4 -4zM1268.5 597.4l4 4l-4 4l-4 -4zM1270 598.8l4 4l-4 4l-4 -4zM1271.5 599.5l4 4l-4 4l-4 -4zM1273 598.4l4 4l-4 4l-4 -4zM1274.5 601.5l4 4l-4 4l-4 -4zM1276 597.7l4 4l-4 4l-4 -4zM1277.5 598.3l4 4l-4 4l-4 -4zM1279 599.9l4 4l-4 4l-4 -4zM1280.5 600.5l4 4l-4 4l-4 -4zM1282 600.3l4 4l-4 4l-4 -4zM1283.5 600.4l4 4l-4 4l-4 -4zM1285 599.7l4 4l-4 4l-4 -4zM1286.5 598.2l4 4l-4 4l-4 -4zM1288 600.4l4 4l-4 4l-4 -4zM1289.5 600.9l4 4l-4 4l-4 -4zM1291 597.7l4 4l-4 4l-4 -4zM1292.5 598.9l4 4l-4 4l-4 -4zM1294 595.3l4 4l-4 4l-4 -4zM1295.5 594.7l4 4l-4 4l-4 -4zM1297 595.7l4 4l-4 4l-4 -4zM1298.5 599.6l4 4l-4 4l-4 -4zM1300 595.4l4 4l-4 4l-4 -4zM1301.5 595.1l4 4l-4 4l-4 -4zM1303 596.4l4 4l-4 4l-4 -4zM1304.5 594.5l4 4l-4 4l-4 -4zM1306 594.8l4 4l-4 4l-4 -4zM1307.5 596.8l4 4l-4 4l-4 -4zM1309 596.6l4 4l-4 4l-4 -4zM1310.5 596.6l4 4l-4 4l-4 -4zM1312 597.7l4 4l-4 4l-4 -4zM1313.5 594.9l4 4l-4 4l-4 -4zM1315 593.2l4 4l-4 4l-4 -4zM1316.5 593.6l4 4l-4 4l-4 -4zM1318 591.9l4 4l-4 4l-4 -4zM1319.5 591.8l4 4l-4 4l-4 -4zM1321 594.8l4 4l-4 4l-4 -4zM1322.5 593.7l4 4l-4 4l-4 -4zM1324 593.7l4 4l-4 4l-4 -4zM1325.5 591.7l4 4l-4 4l-4 -4zM1327 593.1l4 4l-4 4l-4 -4zM1328.5 593.6l4 4l-4 4l-4 -4zM1330 591.5l4 4l-4 4l-4 -4zM1331.5 589.4l4 4l-4 4l-4 -4zM1333 592.2l4 4l-4 4l-4 -4zM1334.5 589.7l4 4l-4 4l-4 -4zM1336 592.1l4 4l-4 4l-4 -4zM1337.5 591.6l4 4l-4 4l-4 -4zM1339 592.3l4 4l-4 4l-4 -4zM1340.5 594l4 4l-4 4l-4 -4zM1342 593.1l4 4l-4 4l-4 -4zM1343.5 593.1l4 4l-4 4l-4 -4zM1345 595.3l4 4l-4 4l-4 -4zM1346.5 592.6l4 4l-4 4l-4 -4zM1348 595.1l4 4l-4 4l-4 -4zM1349.5 594.5l4 4l-4 4l-4 -4zM1351 591.6l4 4l-4 4l-4 -4zM1352.5 592.8l4 4l-4 4l-4 -4zM1354 589.9l4 4l-4 4l-4 -4zM1355.5 590.4l4 4l-4 4l-4 -4zM1357 588.5l4 4l-4 4l-4 -4zM1358.5 589l4 4l-4 4l-4 -4zM1360 586.7l4 4l-4 4l-4 -4zM1361.5 587.8l4 4l-4 4l-4 -4zM1363 584.1l4 4l-4 4l-4 -4zM1364.5 586.6l4 4l-4 4l-4 -4zM1366 583.9l4 4l-4 4l-4 -4zM1367.5 585.7l4 4l-4 4l-4 -4zM1369 587l4 4l-4 4l-4 -4zM1370.5 586.2l4 4l-4 4l-4 -4zM1372 583.3l4 4l-4 4l-4 -4zM1373.5 587.1l4 4l-4 4l-4 -4zM1375 583.5l4 4l-4 4l-4 -4zM1376.5 587.8l4 4l-4 4l-4 -4zM1378 588.4l4 4l-4 4l-4 -4zM1379.5 588.9l4 4l-4 4l-4 -4zM1381 586.4l4 4l-4 4l-4 -4zM1382.5 589l4 4l-4 4l-4 -4zM1384 590.4l4 4l-4 4l-4 -4zM1385.5 593.1l4 4l-4 4l-4 -4zM1387 592l4 4l-4 4l-4 -4zM1388.5 597.5l4 4l-4 4l-4 -4zM1390 597.1l4 4l-4 4l-4 -4zM1391.5 597.7l4 4l-4 4l-4 -4zM362 604l4 4l-4 4l-4 -4zM1391.5 604l4 4l-4 4l-4 -4zM1095 604l4 4l-4 4l-4 -4zM362 609l4 4l-4 4l-4 -4zM1391.5 609l4 4l-4 4l-4 -4zM1095 609l4 4l-4 4l-4 -4zM364.2 410.5l4 4l-4 4l-4 -4zM364.2 581.9l4 4l-4 4l-4 -4zM372 579.7l4 4l-4 4l-4 -4zM412.6 571.5l4 4l-4 4l-4 -4zM460.7 567.5l4 4l-4 4l-4 -4zM460.7 584.2l4 4l-4 4l-4 -4zM475.8 574.7l4 4l-4 4l-4 -4zM475.8 585.5l4 4l-4 4l-4 -4zM492.4 426.8l4 4l-4 4l-4 -4zM492.4 573.8l4 4l-4 4l-4 -4zM497.2 529.2l4 4l-4 4l-4 -4zM506 583.7l4 4l-4 4l-4 -4zM548.8 427.7l4 4l-4 4l-4 -4zM548.8 571.1l4 4l-4 4l-4 -4zM595.8 583.7l4 4l-4 4l-4 -4zM612.6 420l4 4l-4 4l-4 -4zM612.6 571.5l4 4l-4 4l-4 -4zM619.6 555.3l4 4l-4 4l-4 -4zM619.6 563.9l4 4l-4 4l-4 -4zM619.6 570.2l4 4l-4 4l-4 -4zM626 584.2l4 4l-4 4l-4 -4zM1144.5 568.4l4 4l-4 4l-4 -4zM1144.5 581.9l4 4l-4 4l-4 -4zM1219.3 537.3l4 4l-4 4l-4 -4zM1233.3 444.8l4 4l-4 4l-4 -4zM1233.3 554l4 4l-4 4l-4 -4zM1233.3 577.4l4 4l-4 4l-4 -4zM1320.5 423.2l4 4l-4 4l-4 -4zM1320.5 563.9l4 4l-4 4l-4 -4zM1327 567.5l4 4l-4 4l-4 -4zM1347.4 245.9l4 4l-4 4l-4 -4zM1347.4 320.3l4 4l-4 4l-4 -4zM1347.4 373.1l4 4l-4 4l-4 -4zM1347.4 377.6l4 4l-4 4l-4 -4zM1347.4 383.5l4 4l-4 4l-4 -4zM1347.4 393.4l4 4l-4 4l-4 -4zM1347.4 542.7l4 4l-4 4l-4 -4zM1347.4 563.9l4 4l-4 4l-4 -4zM1348.2 383.5l4 4l-4 4l-4 -4zM1349.5 397l4 4l-4 4l-4 -4zM1370.5 556.7l4 4l-4 4l-4 -4zM1380.8 553.5l4 4l-4 4l-4 -4zM1384 417.8l4 4l-4 4l-4 -4zM1384 545.8l4 4l-4 4l-4 -4zM1384 561.6l4 4l-4 4l-4 -4zM461.3 579.3l4 4l-4 4l-4 -4zM625.6 588.3l4 4l-4 4l-4 -4zM568.4 592.1l4 4l-4 4l-4 -4zM384.4 588.8l4 4l-4 4l-4 -4zM623.2 587l4 4l-4 4l-4 -4zM533.2 592.2l4 4l-4 4l-4 -4zM529.3 591.6l4 4l-4 4l-4 -4zM524.5 590.8l4 4l-4 4l-4 -4zM534.3 590.7l4 4l-4 4l-4 -4zM624 584.6l4 4l-4 4l-4 -4zM582.5 590.5l4 4l-4 4l-4 -4zM463.2 580.1l4 4l-4 4l-4 -4zM625.1 583.3l4 4l-4 4l-4 -4zM563.5 591.6l4 4l-4 4l-4 -4zM553.8 590.9l4 4l-4 4l-4 -4zM506.1 587.7l4 4l-4 4l-4 -4zM573.3 593.4l4 4l-4 4l-4 -4zM587.8 589.5l4 4l-4 4l-4 -4zM630.5 582.4l4 4l-4 4l-4 -4zM415.2 584l4 4l-4 4l-4 -4zM1126.7 584.9l4 4l-4 4l-4 -4zM1220.3 592.6l4 4l-4 4l-4 -4zM1102.2 583.7l4 4l-4 4l-4 -4zM1224.6 590.4l4 4l-4 4l-4 -4zM1119.3 591.4l4 4l-4 4l-4 -4zM1144.4 585.4l4 4l-4 4l-4 -4zM1165.8 591.3l4 4l-4 4l-4 -4zM1271.8 585.2l4 4l-4 4l-4 -4zM1131.9 584.3l4 4l-4 4l-4 -4zM1215.6 585.3l4 4l-4 4l-4 -4zM1227 584.3l4 4l-4 4l-4 -4zM1249.7 584.8l4 4l-4 4l-4 -4zM1137.5 586.2l4 4l-4 4l-4 -4zM1200.9 585.7l4 4l-4 4l-4 -4zM1183.3 584.4l4 4l-4 4l-4 -4zM1205.5 590.2l4 4l-4 4l-4 -4zM1144.5 591.4l4 4l-4 4l-4 -4zM1193.7 592.2l4 4l-4 4l-4 -4zM1188.7 591.4l4 4l-4 4l-4 -4zM1193.4 588l4 4l-4 4l-4 -4zM1202.5 584.6l4 4l-4 4l-4 -4zM1101.3 584.8l4 4l-4 4l-4 -4zM1188.9 587.4l4 4l-4 4l-4 -4zM1226.4 584.8l4 4l-4 4l-4 -4zM1171.2 588.8l4 4l-4 4l-4 -4zM1282.5 592l4 4l-4 4l-4 -4zM1221 586.7l4 4l-4 4l-4 -4zM1105.4 587l4 4l-4 4l-4 -4zM1229.7 583.9l4 4l-4 4l-4 -4zM1162.8 583.4l4 4l-4 4l-4 -4zM1197 588.2l4 4l-4 4l-4 -4zM1270.5 592.4l4 4l-4 4l-4 -4zM1236.5 586.8l4 4l-4 4l-4 -4zM1164.3 584.6l4 4l-4 4l-4 -4zM1328.1 583.8l4 4l-4 4l-4 -4zM1344.7 582.8l4 4l-4 4l-4 -4zM1311.9 586.8l4 4l-4 4l-4 -4zM1333.9 582l4 4l-4 4l-4 -4zM1376 579.5l4 4l-4 4l-4 -4zM1376.1 578.1l4 4l-4 4l-4 -4zM1342.4 589l4 4l-4 4l-4 -4zM1342.7 580.4l4 4l-4 4l-4 -4zM1358.1 577.2l4 4l-4 4l-4 -4zM1324.4 586.3l4 4l-4 4l-4 -4zM1321.1 583.5l4 4l-4 4l-4 -4zM1356 578.4l4 4l-4 4l-4 -4zM1294.2 586l4 4l-4 4l-4 -4zM1382.1 578.9l4 4l-4 4l-4 -4zM1295.2 591l4 4l-4 4l-4 -4zM1290.6 593l4 4l-4 4l-4 -4zM1385.8 580.1l4 4l-4 4l-4 -4zM1358.4 577l4 4l-4 4l-4 -4zM1384.6 579.4l4 4l-4 4l-4 -4zM1354.1 581.3l4 4l-4 4l-4 -4zM1362.4 577.3l4 4l-4 4l-4 -4zM1360.8 582.8l4 4l-4 4l-4 -4zM1359.4 580.6l4 4l-4 4l-4 -4zM1369.3 581.3l4 4l-4 4l-4 -4zM1308.9 592.1l4 4l-4 4l-4 -4zM1370.6 571.3l4 4l-4 4l-4 -4zM1358.2 582.3l4 4l-4 4l-4 -4zM1375.6 573.3l4 4l-4 4l-4 -4zM1348.5 588.3l4 4l-4 4l-4 -4zM1321.4 585.5l4 4l-4 4l-4 -4zM1323.1 585.1l4 4l-4 4l-4 -4zM1356.7 576.2l4 4l-4 4l-4 -4zM1295.7 587.7l4 4l-4 4l-4 -4zM1294.1 593.4l4 4l-4 4l-4 -4zM1374.3 575.6l4 4l-4 4l-4 -4zM1385.5 581.9l4 4l-4 4l-4 -4zM1291.5 590.5l4 4l-4 4l-4 -4zM1351.6 578.8l4 4l-4 4l-4 -4zM1392 589.7l4 4l-4 4l-4 -4zM1332.9 587.6l4 4l-4 4l-4 -4zM1357 584.8l4 4l-4 4l-4 -4zM1305.8 592.8l4 4l-4 4l-4 -4zM1290.5 587l4 4l-4 4l-4 -4zM1302.7 581.7l4 4l-4 4l-4 -4zM1299.2 583.5l4 4l-4 4l-4 -4zM1303.4 593.2l4 4l-4 4l-4 -4zM1364.8 580.7l4 4l-4 4l-4 -4zM1366.3 580.8l4 4l-4 4l-4 -4zM1295.2 585.2l4 4l-4 4l-4 -4zM1364.2 573.4l4 4l-4 4l-4 -4zM1365.9 582.2l4 4l-4 4l-4 -4zM1355.4 579.7l4 4l-4 4l-4 -4zM1337.9 576.8l4 4l-4 4l-4 -4zM1316.4 579.7l4 4l-4 4l-4 -4zM1364.6 583.6l4 4l-4 4l-4 -4zM1291.5 587.3l4 4l-4 4l-4 -4zM1375 581.8l4 4l-4 4l-4 -4zM1322.4 581.6l4 4l-4 4l-4 -4zM1307.3 582.3l4 4l-4 4l-4 -4zM1340.6 591.4l4 4l-4 4l-4 -4zM1084.3 530l4 4l-4 4l-4 -4zM1084.7 519.2l4 4l-4 4l-4 -4zM1083.2 506.4l4 4l-4 4l-4 -4zM1084.3 522.6l4 4l-4 4l-4 -4zM1085.6 546.6l4 4l-4 4l-4 -4zM1084.4 507.6l4 4l-4 4l-4 -4zM1087.2 507.8l4 4l-4 4l-4 -4zM1085.3 560l4 4l-4 4l-4 -4zM1082.8 487.7l4 4l-4 4l-4 -4zM1086 503.2l4 4l-4 4l-4 -4zM1084.2 526.7l4 4l-4 4l-4 -4zM1087.4 502.8l4 4l-4 4l-4 -4zM1085.5 558.2l4 4l-4 4l-4 -4zM1084.6 496.8l4 4l-4 4l-4 -4zM1084.4 518.4l4 4l-4 4l-4 -4zM1085.5 496l4 4l-4 4l-4 -4zM1086.5 560.9l4 4l-4 4l-4 -4zM1082.5 563.1l4 4l-4 4l-4 -4zM1084.6 528.8l4 4l-4 4l-4 -4zM1086.6 496.9l4 4l-4 4l-4 -4zM1082.7 502.6l4 4l-4 4l-4 -4zM1086.6 499l4 4l-4 4l-4 -4zM1085.4 561.9l4 4l-4 4l-4 -4zM1086.8 505.4l4 4l-4 4l-4 -4zM1085.9 494.1l4 4l-4 4l-4 -4zM1084.2 581.9l4 4l-4 4l-4 -4zM1085.3 506.4l4 4l-4 4l-4 -4zM1083.5 511.4l4 4l-4 4l-4 -4zM1087.2 566.1l4 4l-4 4l-4 -4zM1085.5 519.1l4 4l-4 4l-4 -4zM1084.8 569l4 4l-4 4l-4 -4zM1083.8 511.3l4 4l-4 4l-4 -4zM1086.5 542.2l4 4l-4 4l-4 -4zM1082.9 505.5l4 4l-4 4l-4 -4zM1096.7 565.4l4 4l-4 4l-4 -4zM1096 505.5l4 4l-4 4l-4 -4zM1097.1 539.4l4 4l-4 4l-4 -4zM1095.7 533.3l4 4l-4 4l-4 -4zM1094.7 569.1l4 4l-4 4l-4 -4zM1094.6 523.2l4 4l-4 4l-4 -4zM1095.3 535.5l4 4l-4 4l-4 -4zM1095.4 539.8l4 4l-4 4l-4 -4zM1094.5 582.4l4 4l-4 4l-4 -4zM1097.5 552.7l4 4l-4 4l-4 -4zM1094.4 529.4l4 4l-4 4l-4 -4zM1096.8 572.3l4 4l-4 4l-4 -4zM1096.1 555.3l4 4l-4 4l-4 -4zM1095.8 584.6l4 4l-4 4l-4 -4zM1094.1 497.1l4 4l-4 4l-4 -4zM1097 542.6l4 4l-4 4l-4 -4zM1096 562.8l4 4l-4 4l-4 -4zM1096.7 548l4 4l-4 4l-4 -4zM1097.3 517.2l4 4l-4 4l-4 -4zM1096.9 499.5l4 4l-4 4l-4 -4zM1096.5 594.6l4 4l-4 4l-4 -4zM1096.2 591.4l4 4l-4 4l-4 -4zM1095.5 594.3l4 4l-4 4l-4 -4zM1098.3 575.8l4 4l-4 4l-4 -4zM1097.7 574.1l4 4l-4 4l-4 -4zM1100.5 594l4 4l-4 4l-4 -4z" fill="#2f7ed8"/><path d="M414.5 604.5V619M474.7 604.5V619M535.4 604.5V619M595.8 604.5V619M656 604.5V619M715.4 604.5V619M836.8 604.5V619M866 604.5V619M956.4 604.5V619M1066 608V619M1167 600.6V619M1318 604V619M1378 604V619" stroke="#910000" stroke-width="2.4" fill="none"/><path d="M358 618H1396V627H358zM380.8 615.5h8v3h-8zM410.9 615.5h8v3h-8zM441 615.5h8v3h-8zM471 615.5h8v3h-8zM501.1 615.5h8v3h-8zM531.2 615.5h8v3h-8zM561.3 615.5h8v3h-8zM591.4 615.5h8v3h-8zM621.4 615.5h8v3h-8zM651.5 615.5h8v3h-8zM681.6 615.5h8v3h-8zM711.7 615.5h8v3h-8zM741.8 615.5h8v3h-8zM771.8 615.5h8v3h-8zM801.9 615.5h8v3h-8zM832 615.5h8v3h-8zM862.1 615.5h8v3h-8zM892.2 615.5h8v3h-8zM922.2 615.5h8v3h-8zM952.3 615.5h8v3h-8zM982.4 615.5h8v3h-8zM1012.5 615.5h8v3h-8zM1042.6 615.5h8v3h-8zM1072.6 615.5h8v3h-8zM1102.7 615.5h8v3h-8zM1132.8 615.5h8v3h-8zM1162.9 615.5h8v3h-8zM1193 615.5h8v3h-8zM1223 615.5h8v3h-8zM1253.1 615.5h8v3h-8zM1283.2 615.5h8v3h-8zM1313.3 615.5h8v3h-8zM1343.4 615.5h8v3h-8zM1373.4 615.5h8v3h-8zM362 617h8v2h-8zM410.5 600.5h8v8h-8zM470.7 600.5h8v8h-8zM531.4 600.5h8v8h-8zM591.8 600.5h8v8h-8zM652 600.5h8v8h-8zM711.4 600.5h8v8h-8zM832.8 600.5h8v8h-8zM862 600.5h8v8h-8zM952.4 600.5h8v8h-8zM1062 604h8v8h-8zM1163 596.6h8v8h-8zM1314 600h8v8h-8zM1374 600h8v8h-8zM522.6 506.5h4V619h-4zM520.6 502.5h8v8h-8zM703.5 495.7h3V619h-3zM701 491.7h8v8h-8zM884.5 495.7h3V619h-3zM882 491.7h8v8h-8zM1245.5 509.7h3V619h-3zM1243 505.7h8v8h-8zM520.6 509.8h8v8h-8zM521.2 518.8h8v8h-8z" fill="#910000"/><rect x="538.5" y="782.5" width="612.5" height="27.5" fill="#fff" stroke="#8c8c8c"/><path d="M545.5 796h12.6" stroke="#0d233a" stroke-width="2"/><circle cx="551.8" cy="796" r="4" fill="#0d233a"/><text x="562" y="800" font-size="12" fill="#333a44" textLength="80.5" lengthAdjust="spacing">Sample Value,</text><text x="709.6" y="800" font-size="12" fill="#333a44" textLength="21.4" lengthAdjust="spacing">444</text><path d="M751.7 796h12.6" stroke="#2f7ed8" stroke-width="2"/><path d="M758 792l4 4l-4 4l-4 -4z" fill="#2f7ed8"/><text x="768.4" y="800" font-size="12" fill="#333a44" textLength="80.5" lengthAdjust="spacing">Sample Value,</text><text x="915.6" y="800" font-size="12" fill="#333a44" textLength="21.2" lengthAdjust="spacing">312</text><path d="M957 796h12.6" stroke="#910000" stroke-width="2"/><path d="M959.7 792.4h7.2v7.2h-7.2z" fill="#910000"/><text x="974.4" y="800" font-size="12" fill="#333a44" textLength="80.5" lengthAdjust="spacing">Sample Value,</text><text x="1121.4" y="800" font-size="12" fill="#333a44" textLength="20.5" lengthAdjust="spacing">431</text></svg><div class="a " style="left:275px;top:170px;width:818px;height:435px;border:5px solid #ed1c24"></div><div class="a " style="left:286px;top:177px;width:31.5px;height:24px;background:#fff;border:1px solid #dcdcdc"></div><svg class="a" style="left:288.5px;top:181px" width="26" height="16" viewBox="0 0 26 16"><g fill="none" stroke="#3c3c3c"><circle cx="6" cy="6" r="3.6" stroke-width="2.6"/><circle cx="6" cy="6" r="5.4" stroke-width="1.8" stroke-dasharray="2.1 2.14"/><circle cx="12.4" cy="12" r="2.2" stroke-width="1.8"/><circle cx="12.4" cy="12" r="3.4" stroke-width="1.2" stroke-dasharray="1.4 1.27"/></g><path d="M19.2 8.8h6l-3 3.3z" fill="#3c3c3c"/></svg><div class="a " style="left:286px;top:200px;width:150px;height:60px;background:#fff;border:1px solid #cacfd2;box-shadow:1.5px 1.5px 1px #e8e8e8"></div><div class="a " style="left:287px;top:230px;width:148px;height:23.7px;background:#d8e3ea"></div><div class="t " style="left:311.3px;top:212.0px;font-size:12.5px;letter-spacing:0.46px;color:#1a1a1a;">Chart Types...</div><div class="t " style="left:311.3px;top:236.0px;font-size:12.5px;letter-spacing:0.57px;color:#6a6a6a;">Chart Format...</div><div class="a" style="left:600px;top:230px;width:520px;height:364px;overflow:hidden"><div class="a" style="left:34.5px;top:24px;width:446.5px;height:360px;background:#808080;box-shadow:0 0 4px 1.5px rgba(70,70,70,.6),3px 1px 4px 0 rgba(0,0,0,.3)"></div></div><div class="a " style="left:636px;top:255.5px;width:443.5px;height:338.5px;background:#fff"></div><div class="t " style="left:648.9px;top:262.0px;font-size:15px;letter-spacing:0.41px;color:#1a1a1a;">Chart Format</div><div class="a " style="left:655px;top:324px;width:405.5px;height:214px;background:#fff;border:1px solid #b4b4b4"></div><div class="a " style="left:655px;top:302px;width:64.5px;height:24px;background:#fff;border:1px solid #bcbcbc;border-bottom:none;border-radius:6px 6px 0 0"></div><div class="t " style="left:671.0px;top:306.0px;font-size:14px;letter-spacing:1.11px;font-weight:bold;color:#555;">Axis</div><div class="a " style="left:726px;top:302px;width:78.5px;height:23px;background:#fff;border:1px solid #c9c9c9;border-bottom:none;border-radius:6px 6px 0 0"></div><div class="a " style="left:728px;top:306px;width:74.5px;height:19.5px;background:#e9e9e9;border:1px solid #c0c0c0;border-radius:5px 5px 3px 3px"></div><div class="t " style="left:743.6px;top:309.0px;font-size:14px;letter-spacing:0.45px;color:#2a7ba6;">Labels</div><div class="a " style="left:810.5px;top:302px;width:115.5px;height:23px;background:#fff;border:1px solid #c9c9c9;border-bottom:none;border-radius:6px 6px 0 0"></div><div class="a " style="left:812.5px;top:306px;width:111.5px;height:19.5px;background:#e9e9e9;border:1px solid #c0c0c0;border-radius:5px 5px 3px 3px"></div><div class="t " style="left:827.5px;top:309.0px;font-size:14px;letter-spacing:0.73px;color:#2a7ba6;">Appearance</div><div class="a " style="left:932.5px;top:302px;width:101.5px;height:23px;background:#fff;border:1px solid #c9c9c9;border-bottom:none;border-radius:6px 6px 0 0"></div><div class="a " style="left:934.5px;top:306px;width:97.5px;height:19.5px;background:#e9e9e9;border:1px solid #c0c0c0;border-radius:5px 5px 3px 3px"></div><div class="t " style="left:950.0px;top:309.0px;font-size:14px;letter-spacing:0.70px;color:#2a7ba6;">Advanced</div><div class="t " style="left:671.4px;top:345.0px;font-size:13px;letter-spacing:0.51px;font-weight:bold;color:#555;">X Axis</div><div class="t " style="left:693.0px;top:371.0px;font-size:12.5px;letter-spacing:0.54px;color:#666;">Interval between X-axis labels</div><div class="t " style="left:693.0px;top:405.0px;font-size:12.5px;letter-spacing:0.43px;color:#666;">Rotation of X-axis labels</div><div class="t " style="left:671.4px;top:440.0px;font-size:13px;letter-spacing:0.47px;font-weight:bold;color:#555;">Y Axis</div><div class="t " style="left:693.0px;top:466.0px;font-size:12.5px;letter-spacing:0.54px;color:#666;">Interval between Y-axis labels</div><div class="t " style="left:693.0px;top:500.0px;font-size:12.5px;letter-spacing:0.43px;color:#666;">Rotation of Y-axis labels</div><div class="a " style="left:879.5px;top:366px;width:40px;height:21.5px;background:#fff;border:1px solid;border-color:#808080 #c4c4c4 #cccccc #bcbcbc;border-radius:5px"></div><div class="t " style="left:883.3px;top:371.0px;font-size:12.5px;color:#111;">1</div><div class="a " style="left:843px;top:400px;width:39.5px;height:21.5px;background:#fff;border:1px solid;border-color:#808080 #c4c4c4 #cccccc #bcbcbc;border-radius:5px"></div><div class="t " style="left:846.0px;top:405.0px;font-size:12.5px;color:#111;letter-spacing:.9px;">-45</div><div class="a " style="left:877.5px;top:461px;width:40px;height:21.5px;background:#fff;border:1px solid;border-color:#808080 #c4c4c4 #cccccc #bcbcbc;border-radius:5px"></div><div class="t " style="left:881.3px;top:466.0px;font-size:12.5px;color:#111;">1</div><div class="a " style="left:841.5px;top:495px;width:40px;height:21.5px;background:#fff;border:1px solid;border-color:#808080 #c4c4c4 #cccccc #bcbcbc;border-radius:5px"></div><div class="t " style="left:844.8px;top:500.0px;font-size:12.5px;color:#111;">0</div><div class="a " style="left:656.5px;top:560px;width:64px;height:27.5px;background:#24759f;border-radius:5px"></div><div class="t " style="left:671.5px;top:567.0px;font-size:13px;letter-spacing:0.29px;color:#fff;">Apply</div><div class="a " style="left:728.5px;top:560px;width:48px;height:27.5px;background:#727272;border-radius:5px"></div><div class="t " style="left:744.3px;top:568.0px;font-size:12px;letter-spacing:0.16px;color:#fff;">OK</div><div class="a " style="left:785.5px;top:560px;width:70px;height:27.5px;background:#727272;border-radius:5px"></div><div class="t " style="left:800.8px;top:567.0px;font-size:13px;letter-spacing:-0.17px;color:#fff;">Cancel</div>
</body></html>
